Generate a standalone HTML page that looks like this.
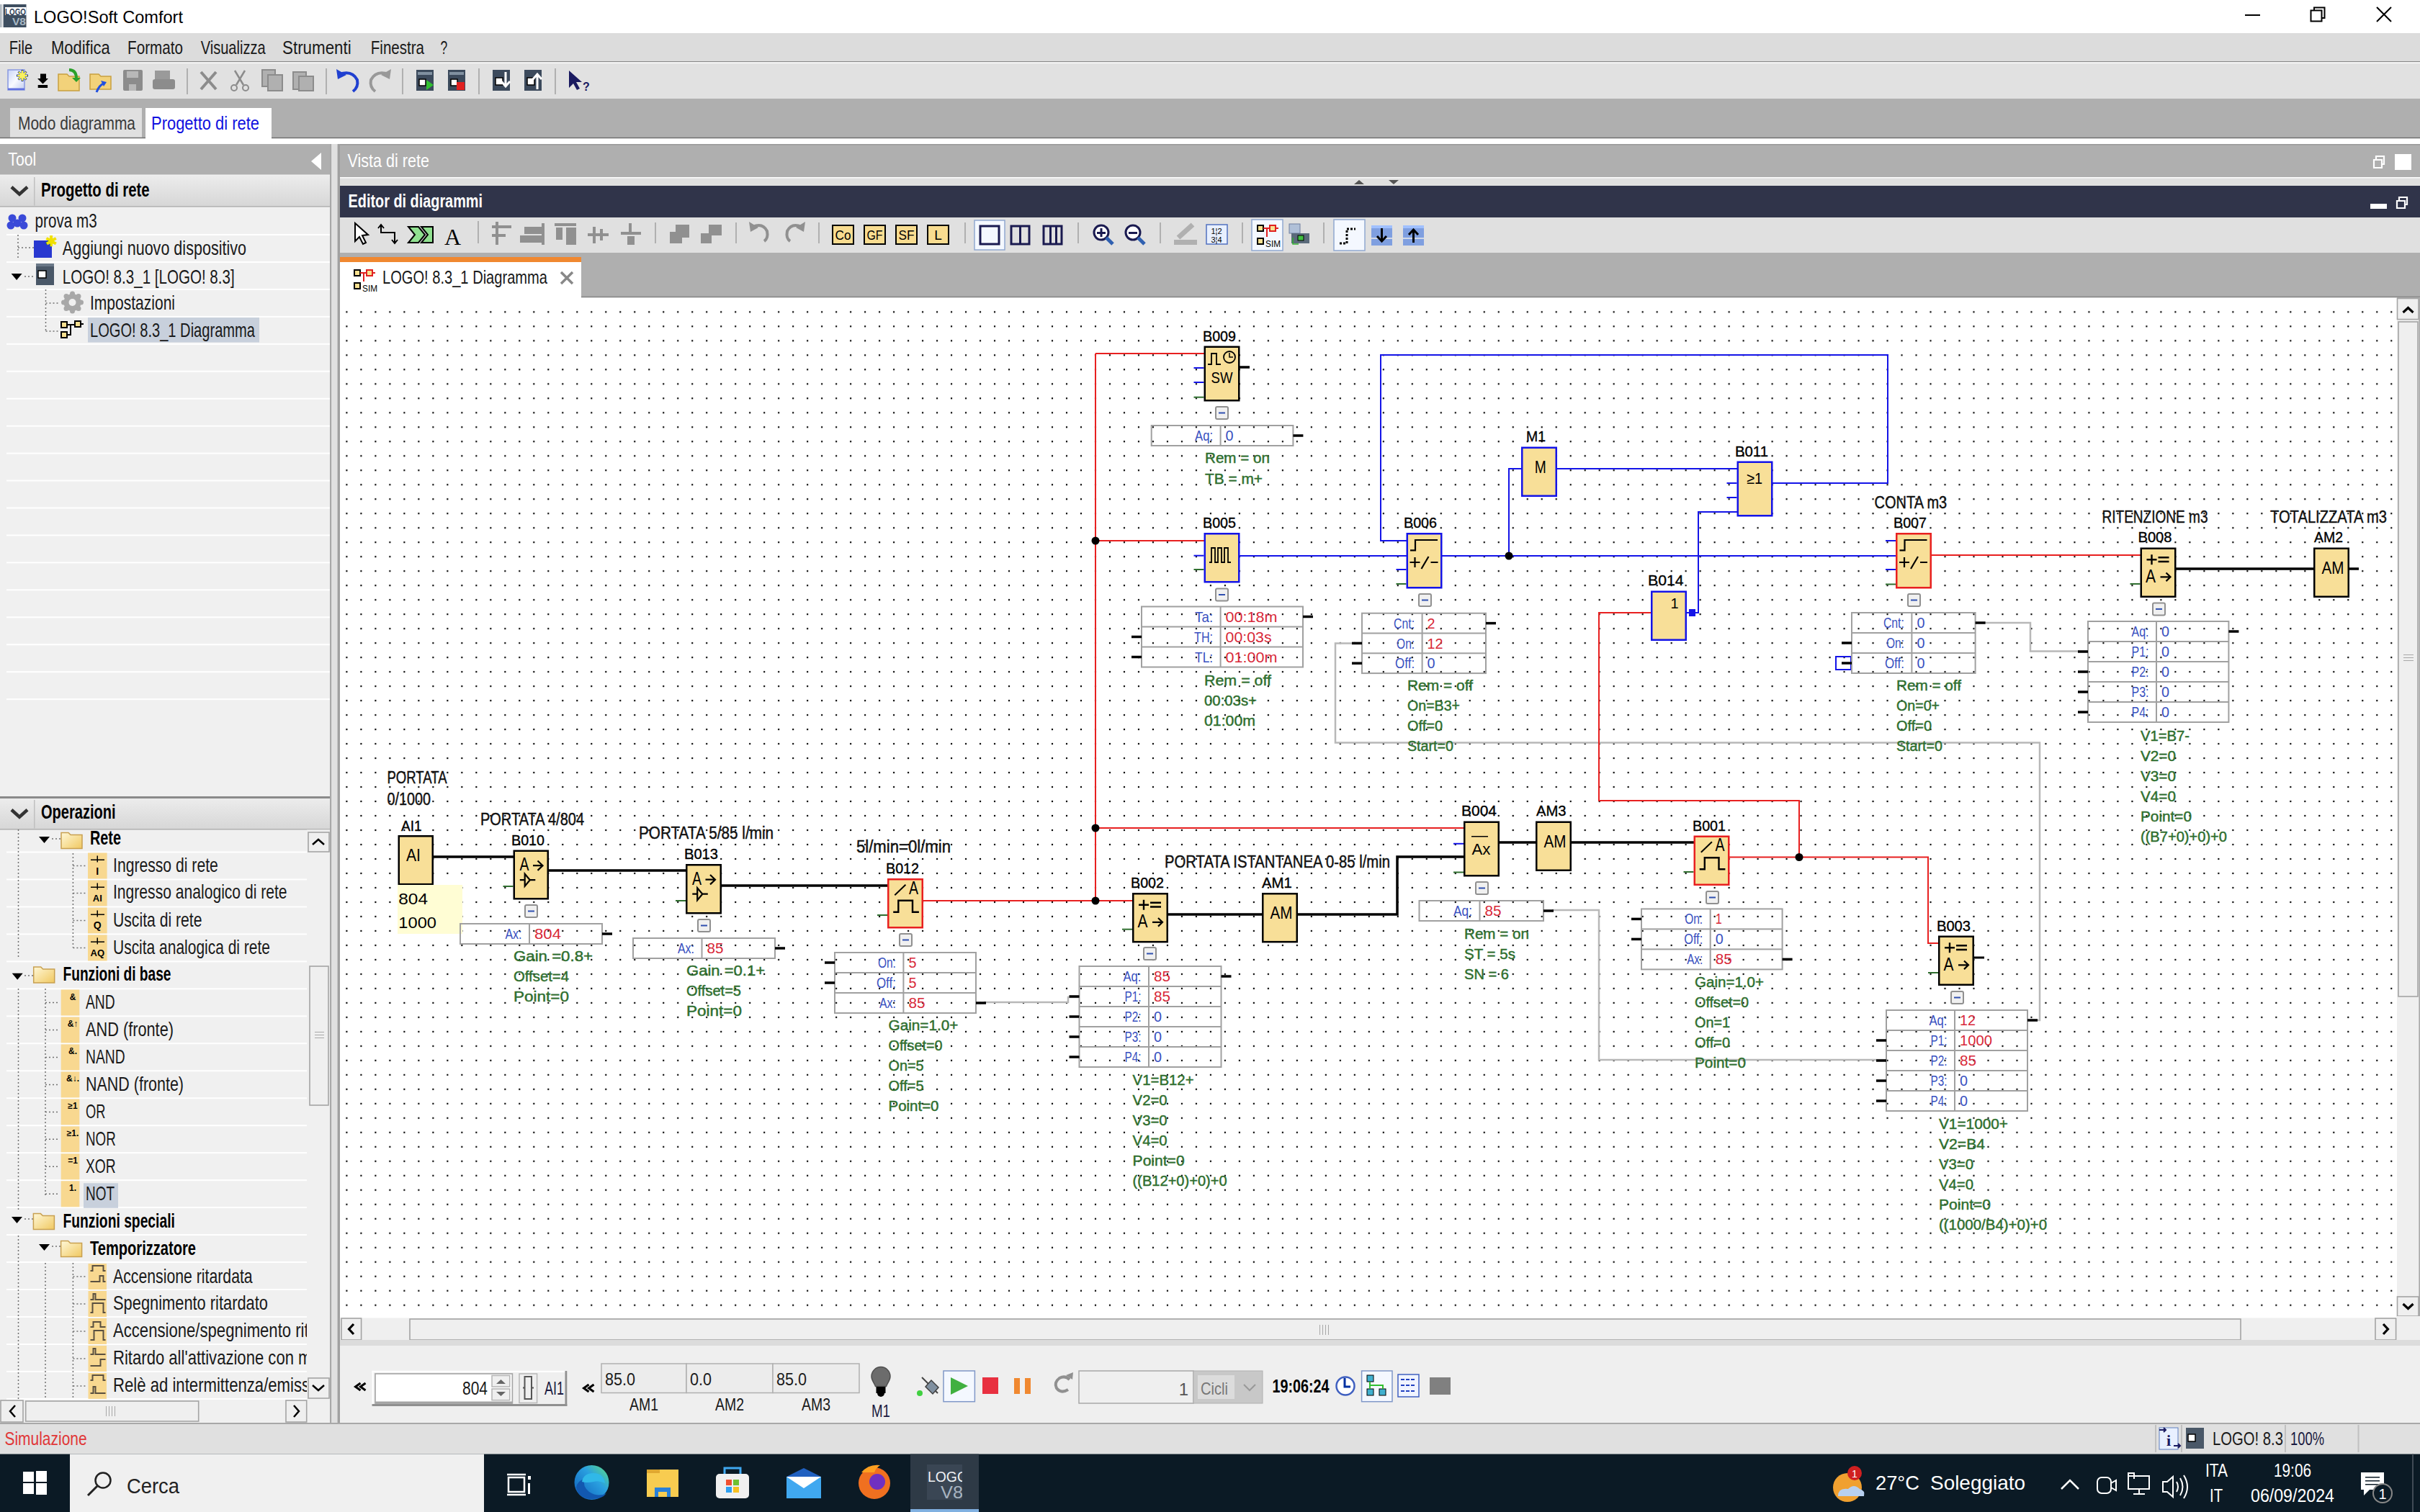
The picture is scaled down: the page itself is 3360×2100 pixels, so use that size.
<!DOCTYPE html>
<html><head><meta charset="utf-8"><title>LOGO!Soft Comfort</title>
<style>html,body{margin:0;padding:0;background:#fff;overflow:hidden;width:3360px;height:2100px}svg{display:block}</style>
</head><body>
<svg width="3360" height="2100" viewBox="0 0 3360 2100" font-family='"Liberation Sans", sans-serif'>
<defs><pattern id="dots" patternUnits="userSpaceOnUse" x="471.4" y="423.3" width="19.992" height="19.992"><circle cx="10" cy="10" r="1.2" fill="#000"/></pattern><linearGradient id="edgeg" x1="0" y1="1" x2="1" y2="0"><stop offset="0" stop-color="#0c5ab8"/><stop offset="0.6" stop-color="#2aa0e0"/><stop offset="1" stop-color="#60e080"/></linearGradient><linearGradient id="docg" x1="0" y1="0" x2="1" y2="1"><stop offset="0" stop-color="#c8d4f8"/><stop offset="0.5" stop-color="#f8faff"/><stop offset="1" stop-color="#c0ccf0"/></linearGradient><linearGradient id="hdrg" x1="0" y1="0" x2="0" y2="1"><stop offset="0" stop-color="#ececec"/><stop offset="1" stop-color="#d6d6d6"/></linearGradient><linearGradient id="foldg" x1="0" y1="0" x2="1" y2="1"><stop offset="0" stop-color="#fff8d8"/><stop offset="1" stop-color="#f0c860"/></linearGradient></defs>
<rect x="0" y="0" width="3360" height="46" fill="#ffffff" />
<rect x="0" y="6" width="1" height="32" fill="#8a96a2" />
<rect x="2" y="6" width="1" height="32" fill="#8a96a2" />
<rect x="4.6" y="6" width="31.9" height="32" fill="#3e4e60" />
<rect x="7" y="10" width="29.5" height="11" fill="#ffffff" />
<text x="7" y="20.5" font-size="13" fill="#33435a" font-family='"Liberation Sans", sans-serif' font-weight="bold" textLength="29" lengthAdjust="spacingAndGlyphs" >LOGO</text>
<text x="17" y="35" font-size="15" fill="#a8b8c4" font-family='"Liberation Sans", sans-serif' font-weight="bold" textLength="19" lengthAdjust="spacingAndGlyphs" >V8</text>
<text x="47" y="32" font-size="24" fill="#000" font-family='"Liberation Sans", sans-serif' textLength="207" lengthAdjust="spacingAndGlyphs" >LOGO!Soft Comfort</text>
<rect x="3117" y="20" width="21" height="2" fill="#000" />
<path d="M3208.5,14.5 h15 v15 h-15 z" fill="none" stroke="#000" stroke-width="2" />
<path d="M3213,14.5 v-4 h14.5 v14.5 h-4" fill="none" stroke="#000" stroke-width="2" />
<path d="M3300,10 L3320,30 M3320,10 L3300,30" fill="none" stroke="#000" stroke-width="2" />
<rect x="0" y="46" width="3360" height="39" fill="#dcdcdc" />
<rect x="0" y="85" width="3360" height="1.5" fill="#8a8a8a" />
<rect x="0" y="86.5" width="3360" height="1.5" fill="#ffffff" />
<text x="12.8" y="74.5" font-size="26" fill="#1a1a1a" font-family='"Liberation Sans", sans-serif' textLength="32.2" lengthAdjust="spacingAndGlyphs" >File</text>
<text x="71" y="74.5" font-size="26" fill="#1a1a1a" font-family='"Liberation Sans", sans-serif' textLength="81.7" lengthAdjust="spacingAndGlyphs" >Modifica</text>
<text x="177" y="74.5" font-size="26" fill="#1a1a1a" font-family='"Liberation Sans", sans-serif' textLength="77" lengthAdjust="spacingAndGlyphs" >Formato</text>
<text x="278.7" y="74.5" font-size="26" fill="#1a1a1a" font-family='"Liberation Sans", sans-serif' textLength="89.9" lengthAdjust="spacingAndGlyphs" >Visualizza</text>
<text x="392" y="74.5" font-size="26" fill="#1a1a1a" font-family='"Liberation Sans", sans-serif' textLength="95.7" lengthAdjust="spacingAndGlyphs" >Strumenti</text>
<text x="514.8" y="74.5" font-size="26" fill="#1a1a1a" font-family='"Liberation Sans", sans-serif' textLength="74.2" lengthAdjust="spacingAndGlyphs" >Finestra</text>
<text x="611.6" y="74.5" font-size="26" fill="#1a1a1a" font-family='"Liberation Sans", sans-serif' textLength="9.7" lengthAdjust="spacingAndGlyphs" >?</text>
<rect x="0" y="88" width="3360" height="49" fill="#e1e1e1" />
<rect x="259" y="95" width="2" height="36" fill="#b0b0b0" />
<rect x="452" y="95" width="2" height="36" fill="#b0b0b0" />
<rect x="558" y="95" width="2" height="36" fill="#b0b0b0" />
<rect x="664" y="95" width="2" height="36" fill="#b0b0b0" />
<rect x="770" y="95" width="2" height="36" fill="#b0b0b0" />
<rect x="11" y="97" width="23" height="28" fill="url(#docg)" stroke="#8898e0" stroke-width="1.5" />
<rect x="11" y="122.5" width="23" height="2.5" fill="#6070e0" />
<path d="M31,97 v16 M23,105 h16 M25.5,99.5 l11,11 M36.5,99.5 l-11,11" fill="none" stroke="#1a3080" stroke-width="3" />
<path d="M31,98 v14 M24,105 h14 M26,100 l10,10 M36,100 l-10,10" fill="none" stroke="#f8f040" stroke-width="2" />
<circle cx="31" cy="105" r="4" fill="#f8f060"/>
<path d="M56,102.5 h8 v6.5 h3 l-7.5,7.5 l-7.5,-7.5 h4 z" fill="#000" />
<rect x="52.7" y="118" width="13.399999999999991" height="4" fill="#000" />
<path d="M81,103 h12 l3,3 h14 v20 h-29 z" fill="#f2d27a" stroke="#c8a040" stroke-width="1.5" />
<path d="M96,97 q10,0 10,12" fill="none" stroke="#2aa02a" stroke-width="4" />
<path d="M100,108 l6,6 l6,-6 z" fill="#2aa02a" />
<path d="M125,103 h12 l3,3 h14 v18 h-29 z" fill="#f2d27a" stroke="#c8a040" stroke-width="1.5" />
<path d="M134,128 q4,-10 10,-12" fill="none" stroke="#2050e0" stroke-width="3" />
<path d="M140,112 l8,2 l-4,6 z" fill="#2050e0" />
<rect x="171" y="97" width="27" height="29" fill="#8c8c8c" rx="2" />
<rect x="176" y="99" width="16" height="9" fill="#b8b8b8" />
<rect x="179" y="117" width="10" height="9" fill="#b8b8b8" />
<rect x="215" y="98" width="21" height="12" fill="#9a9a9a" />
<rect x="212" y="110" width="31" height="14" fill="#8c8c8c" rx="3" />
<path d="M279,100 L300,124 M300,100 L279,124" fill="none" stroke="#8c8c8c" stroke-width="4" />
<path d="M326,98 L338,118 M340,98 L328,118" fill="none" stroke="#8c8c8c" stroke-width="2.5" />
<circle cx="325" cy="122" r="4" fill="none" stroke="#8c8c8c" stroke-width="2"/>
<circle cx="341" cy="122" r="4" fill="none" stroke="#8c8c8c" stroke-width="2"/>
<rect x="364" y="97" width="18" height="23" fill="#b0b0b0" stroke="#8c8c8c" stroke-width="2" />
<rect x="372" y="104" width="20" height="22" fill="#b0b0b0" stroke="#8c8c8c" stroke-width="2" />
<rect x="407" y="100" width="18" height="24" fill="#b0b0b0" stroke="#8c8c8c" stroke-width="2" />
<rect x="415" y="106" width="20" height="20" fill="#b0b0b0" stroke="#8c8c8c" stroke-width="2" />
<path d="M471,103 q18,-6 25,8 q2,10 -6,16" fill="none" stroke="#2040d0" stroke-width="4" />
<path d="M467,96 l2,14 l12,-6 z" fill="#2040d0" />
<path d="M540,103 q-18,-6 -25,8 q-2,10 6,16" fill="none" stroke="#999" stroke-width="4" />
<path d="M543,96 l-2,14 l-12,-6 z" fill="#999" />
<rect x="578" y="97" width="24" height="29" fill="#3c4a5c" />
<rect x="580" y="100" width="20" height="4" fill="#8090a0" />
<rect x="582" y="110" width="9" height="9" fill="#fff" stroke="#000" stroke-width="1.5" />
<rect x="622" y="97" width="24" height="29" fill="#3c4a5c" />
<rect x="624" y="100" width="20" height="4" fill="#8090a0" />
<rect x="626" y="110" width="9" height="9" fill="#fff" stroke="#000" stroke-width="1.5" />
<path d="M592,111 l10,7 l-10,7 z" fill="#30c030" />
<rect x="634" y="114" width="11" height="11" fill="#e02020" />
<rect x="684" y="97" width="24" height="29" fill="#3c4a5c" />
<rect x="688" y="108" width="10" height="10" fill="#fff" stroke="#000" stroke-width="1.5" />
<path d="M702,100 v20 M696,113 l6,7 l6,-7" fill="none" stroke="#fff" stroke-width="3" />
<rect x="728" y="97" width="24" height="29" fill="#3c4a5c" />
<rect x="732" y="108" width="10" height="10" fill="#fff" stroke="#000" stroke-width="1.5" />
<path d="M746,124 v-20 M740,110 l6,-7 l6,7" fill="none" stroke="#fff" stroke-width="3" />
<path d="M790,98 l0,24 l6,-6 l5,9 l4,-2 l-5,-9 l8,0 z" fill="#1a1a60" />
<text x="809" y="126" font-size="16" fill="#1a1a60" font-family='"Liberation Sans", sans-serif' font-weight="bold" >?</text>
<rect x="0" y="137" width="3360" height="53.5" fill="#afafaf" />
<rect x="0" y="190.5" width="3360" height="2.0" fill="#6e6e6e" />
<rect x="14" y="150" width="183" height="40.5" fill="#e0e0e0" />
<rect x="202" y="150" width="175" height="43" fill="#ffffff" />
<text x="25" y="179.5" font-size="26" fill="#3a3a3a" font-family='"Liberation Sans", sans-serif' textLength="163" lengthAdjust="spacingAndGlyphs" >Modo diagramma</text>
<text x="210" y="179.5" font-size="26" fill="#1010e0" font-family='"Liberation Sans", sans-serif' textLength="150" lengthAdjust="spacingAndGlyphs" >Progetto di rete</text>
<rect x="0" y="192.5" width="3360" height="7.5" fill="#ffffff" />
<rect x="0" y="200" width="458" height="1776" fill="#f0f0f0" />
<rect x="458" y="200" width="2.5" height="1776" fill="#a8a8a8" />
<rect x="460.5" y="200" width="8.0" height="1776" fill="#e0e0e0" />
<rect x="468.5" y="200" width="3.5" height="1776" fill="#a0a0a0" />
<rect x="0" y="200" width="458" height="42.5" fill="#afafaf" />
<text x="11.3" y="230" font-size="26" fill="#ffffff" font-family='"Liberation Sans", sans-serif' textLength="39.0" lengthAdjust="spacingAndGlyphs" >Tool</text>
<path d="M446,212 L432,224 L446,236 z" fill="#ffffff" />
<rect x="0" y="244" width="458" height="43.5" fill="url(#hdrg)"/>
<rect x="0" y="286.0" width="458" height="1.5" fill="#b4b4b4" />
<rect x="47" y="246" width="1.5" height="39.5" fill="#c0c0c0" />
<path d="M16,259.75 l11,10 l11,-10" fill="none" stroke="#333" stroke-width="4.5" />
<text x="57" y="272.5" font-size="28" fill="#000" font-family='"Liberation Sans", sans-serif' font-weight="bold" textLength="150.6" lengthAdjust="spacingAndGlyphs" >Progetto di rete</text>
<rect x="9" y="325.0" width="449" height="2.0" fill="#ffffff" />
<rect x="9" y="362.95" width="449" height="2.0" fill="#ffffff" />
<rect x="9" y="400.9" width="449" height="2.0" fill="#ffffff" />
<rect x="9" y="438.85" width="449" height="2.0" fill="#ffffff" />
<rect x="9" y="476.8" width="449" height="2.0" fill="#ffffff" />
<rect x="9" y="514.75" width="449" height="2.0" fill="#ffffff" />
<rect x="9" y="552.7" width="449" height="2.0" fill="#ffffff" />
<rect x="9" y="590.6500000000001" width="449" height="2.0" fill="#ffffff" />
<rect x="9" y="628.6" width="449" height="2.0" fill="#ffffff" />
<rect x="9" y="666.55" width="449" height="2.0" fill="#ffffff" />
<rect x="9" y="704.5" width="449" height="2.0" fill="#ffffff" />
<rect x="9" y="742.45" width="449" height="2.0" fill="#ffffff" />
<rect x="9" y="780.4000000000001" width="449" height="2.0" fill="#ffffff" />
<rect x="9" y="818.35" width="449" height="2.0" fill="#ffffff" />
<rect x="9" y="856.3000000000001" width="449" height="2.0" fill="#ffffff" />
<rect x="9" y="894.25" width="449" height="2.0" fill="#ffffff" />
<rect x="9" y="932.2" width="449" height="2.0" fill="#ffffff" />
<rect x="9" y="970.1500000000001" width="449" height="2.0" fill="#ffffff" />
<circle cx="17" cy="303" r="5.5" fill="#3a4ad8"/>
<circle cx="31" cy="303" r="5.5" fill="#3a4ad8"/>
<circle cx="24" cy="310" r="5.5" fill="#3a4ad8"/>
<circle cx="15" cy="313" r="5.5" fill="#3a4ad8"/>
<circle cx="33" cy="313" r="5.5" fill="#3a4ad8"/>
<text x="48.6" y="316" font-size="28" fill="#1a1a1a" font-family='"Liberation Sans", sans-serif' textLength="86.1" lengthAdjust="spacingAndGlyphs" >prova m3</text>
<line x1="25" y1="326" x2="25" y2="361" stroke="#707070" stroke-width="1.5" stroke-dasharray="2,3"/>
<line x1="25" y1="344" x2="47" y2="344" stroke="#707070" stroke-width="1.5" stroke-dasharray="2,3"/>
<rect x="47" y="334" width="25" height="24" fill="#2838d0" />
<text x="71" y="342" font-size="20" fill="#f0e000" font-family='"Liberation Sans", sans-serif' font-weight="bold" text-anchor="middle" >✱</text>
<text x="86.8" y="354" font-size="28" fill="#1a1a1a" font-family='"Liberation Sans", sans-serif' textLength="255.2" lengthAdjust="spacingAndGlyphs" >Aggiungi nuovo dispositivo</text>
<path d="M15.6,380 h15 l-7.5,9 z" fill="#000" />
<line x1="34" y1="384" x2="48" y2="384" stroke="#707070" stroke-width="1.5" stroke-dasharray="2,3"/>
<rect x="50" y="366" width="25" height="30" fill="#4a5868" />
<rect x="50" y="366" width="25" height="4" fill="#6a7888" />
<rect x="53" y="376" width="11" height="10" fill="#ffffff" stroke="#000" stroke-width="1.5" />
<text x="86.8" y="394" font-size="28" fill="#1a1a1a" font-family='"Liberation Sans", sans-serif' textLength="238.8" lengthAdjust="spacingAndGlyphs" >LOGO! 8.3_1 [LOGO! 8.3]</text>
<line x1="63.5" y1="402" x2="63.5" y2="460" stroke="#707070" stroke-width="1.5" stroke-dasharray="2,3"/>
<line x1="63.5" y1="421" x2="83" y2="421" stroke="#707070" stroke-width="1.5" stroke-dasharray="2,3"/>
<line x1="63.5" y1="460" x2="83" y2="460" stroke="#707070" stroke-width="1.5" stroke-dasharray="2,3"/>
<circle cx="100.5" cy="420" r="12" fill="#a8a8a8"/>
<circle cx="112.5" cy="420.0" r="3.5" fill="#a8a8a8"/>
<circle cx="108.98528137423857" cy="428.4852813742386" r="3.5" fill="#a8a8a8"/>
<circle cx="100.5" cy="432.0" r="3.5" fill="#a8a8a8"/>
<circle cx="92.01471862576143" cy="428.4852813742386" r="3.5" fill="#a8a8a8"/>
<circle cx="88.5" cy="420.0" r="3.5" fill="#a8a8a8"/>
<circle cx="92.01471862576143" cy="411.5147186257614" r="3.5" fill="#a8a8a8"/>
<circle cx="100.5" cy="408.0" r="3.5" fill="#a8a8a8"/>
<circle cx="108.98528137423857" cy="411.5147186257614" r="3.5" fill="#a8a8a8"/>
<circle cx="100.5" cy="420" r="5" fill="#f0f0f0"/>
<text x="125" y="429.7" font-size="28" fill="#1a1a1a" font-family='"Liberation Sans", sans-serif' textLength="118" lengthAdjust="spacingAndGlyphs" >Impostazioni</text>
<rect x="122" y="441" width="238" height="34.5" fill="#c8d0dc" />
<rect x="85" y="447" width="8" height="8" fill="#f8e090" stroke="#000" stroke-width="2" />
<rect x="85" y="461" width="8" height="8" fill="#f8e090" stroke="#000" stroke-width="2" />
<rect x="104" y="446" width="8" height="8" fill="#f8e090" stroke="#000" stroke-width="2" />
<path d="M93,451 h11 M98,451 v14 h-5 M112,450 h4" fill="none" stroke="#000" stroke-width="2" />
<text x="125" y="468" font-size="28" fill="#1a1a1a" font-family='"Liberation Sans", sans-serif' textLength="229" lengthAdjust="spacingAndGlyphs" >LOGO! 8.3_1 Diagramma</text>
<rect x="0" y="1106" width="458" height="3" fill="#8a8a8a" />
<rect x="0" y="1109" width="458" height="43.5" fill="url(#hdrg)"/>
<rect x="0" y="1151.0" width="458" height="1.5" fill="#b4b4b4" />
<rect x="47" y="1111" width="1.5" height="39.5" fill="#c0c0c0" />
<path d="M16,1124.75 l11,10 l11,-10" fill="none" stroke="#333" stroke-width="4.5" />
<text x="57" y="1137" font-size="28" fill="#000" font-family='"Liberation Sans", sans-serif' font-weight="bold" textLength="103.6" lengthAdjust="spacingAndGlyphs" >Operazioni</text>
<rect x="9" y="1182.5" width="417" height="2.0" fill="#ffffff" />
<rect x="9" y="1220.47" width="417" height="2.0" fill="#ffffff" />
<rect x="9" y="1258.44" width="417" height="2.0" fill="#ffffff" />
<rect x="9" y="1296.41" width="417" height="2.0" fill="#ffffff" />
<rect x="9" y="1334.38" width="417" height="2.0" fill="#ffffff" />
<rect x="9" y="1372.3500000000001" width="417" height="2.0" fill="#ffffff" />
<rect x="9" y="1410.3200000000002" width="417" height="2.0" fill="#ffffff" />
<rect x="9" y="1448.2900000000002" width="417" height="2.0" fill="#ffffff" />
<rect x="9" y="1486.2600000000002" width="417" height="2.0" fill="#ffffff" />
<rect x="9" y="1524.2300000000002" width="417" height="2.0" fill="#ffffff" />
<rect x="9" y="1562.2000000000003" width="417" height="2.0" fill="#ffffff" />
<rect x="9" y="1600.1700000000003" width="417" height="2.0" fill="#ffffff" />
<rect x="9" y="1638.1400000000003" width="417" height="2.0" fill="#ffffff" />
<rect x="9" y="1676.1100000000004" width="417" height="2.0" fill="#ffffff" />
<rect x="9" y="1714.0800000000004" width="417" height="2.0" fill="#ffffff" />
<rect x="9" y="1752.0500000000004" width="417" height="2.0" fill="#ffffff" />
<rect x="9" y="1790.0200000000004" width="417" height="2.0" fill="#ffffff" />
<rect x="9" y="1827.9900000000005" width="417" height="2.0" fill="#ffffff" />
<rect x="9" y="1865.9600000000005" width="417" height="2.0" fill="#ffffff" />
<rect x="9" y="1903.9300000000005" width="417" height="2.0" fill="#ffffff" />
<rect x="9" y="1941.9000000000005" width="417" height="2.0" fill="#ffffff" />
<rect x="426" y="1152.5" width="32" height="791.5" fill="#f0f0f0" />
<rect x="428" y="1156" width="29" height="27" fill="#efefef" stroke="#a4a4a4" stroke-width="1.6" />
<path d="M434,1173 l8,-7 l8,7" fill="none" stroke="#000" stroke-width="2.5" />
<rect x="430" y="1342" width="26" height="193" fill="#efefef" stroke="#a4a4a4" stroke-width="1.6" />
<rect x="437" y="1433" width="13" height="1" fill="#a8a8a8" />
<rect x="437" y="1437" width="13" height="1" fill="#a8a8a8" />
<rect x="437" y="1441" width="13" height="1" fill="#a8a8a8" />
<rect x="428" y="1914" width="29" height="28" fill="#efefef" stroke="#a4a4a4" stroke-width="1.6" />
<path d="M434,1924 l8,7 l8,-7" fill="none" stroke="#000" stroke-width="2.5" />
<rect x="0" y="1944" width="458" height="32" fill="#f0f0f0" />
<rect x="1" y="1945" width="31" height="30" fill="#efefef" stroke="#a4a4a4" stroke-width="1.6" />
<path d="M21,1952 l-7,8 l7,8" fill="none" stroke="#000" stroke-width="2.5" />
<rect x="35.7" y="1946" width="240.0" height="28" fill="#efefef" stroke="#a4a4a4" stroke-width="1.6" />
<rect x="147" y="1953" width="1" height="14" fill="#a8a8a8" />
<rect x="151" y="1953" width="1" height="14" fill="#a8a8a8" />
<rect x="155" y="1953" width="1" height="14" fill="#a8a8a8" />
<rect x="159" y="1953" width="1" height="14" fill="#a8a8a8" />
<rect x="397" y="1945" width="28.69999999999999" height="30" fill="#efefef" stroke="#a4a4a4" stroke-width="1.6" />
<path d="M408,1952 l7,8 l-7,8" fill="none" stroke="#000" stroke-width="2.5" />
<line x1="25.5" y1="1152" x2="25.5" y2="1331" stroke="#707070" stroke-width="1.5" stroke-dasharray="2,3"/>
<path d="M54,1162 h15 l-7.5,9 z" fill="#000" />
<line x1="72" y1="1165" x2="84" y2="1165" stroke="#707070" stroke-width="1.5" stroke-dasharray="2,3"/>
<path d="M85,1156.5 h10 l3,3 h16 v19 h-29 z" fill="url(#foldg)" stroke="#c8a050" stroke-width="1.5" />
<text x="125" y="1173" font-size="28" fill="#000" font-family='"Liberation Sans", sans-serif' font-weight="bold" textLength="43" lengthAdjust="spacingAndGlyphs" >Rete</text>
<line x1="101.4" y1="1185" x2="101.4" y2="1316" stroke="#707070" stroke-width="1.5" stroke-dasharray="2,3"/>
<line x1="101.4" y1="1202.5" x2="120" y2="1202.5" stroke="#707070" stroke-width="1.5" stroke-dasharray="2,3"/>
<rect x="122" y="1184.5" width="26.599999999999994" height="36.0" fill="#f8d890" />
<rect x="126" y="1193.5" width="19" height="1.5" fill="#000" />
<rect x="134.5" y="1188.5" width="1.5" height="9.0" fill="#000" />
<text x="135.3" y="1214.5" font-size="14" fill="#000" font-family='"Liberation Sans", sans-serif' font-weight="bold" text-anchor="middle" >I</text>
<text x="157" y="1210.5" font-size="28" fill="#1a1a1a" font-family='"Liberation Sans", sans-serif' textLength="145.8" lengthAdjust="spacingAndGlyphs" >Ingresso di rete</text>
<line x1="101.4" y1="1240.47" x2="120" y2="1240.47" stroke="#707070" stroke-width="1.5" stroke-dasharray="2,3"/>
<rect x="122" y="1222.47" width="26.599999999999994" height="36.0" fill="#f8d890" />
<rect x="126" y="1231.47" width="19" height="1.5" fill="#000" />
<rect x="134.5" y="1226.47" width="1.5" height="9.0" fill="#000" />
<text x="135.3" y="1252.47" font-size="13" fill="#000" font-family='"Liberation Sans", sans-serif' font-weight="bold" text-anchor="middle" >AI</text>
<text x="157" y="1248" font-size="28" fill="#1a1a1a" font-family='"Liberation Sans", sans-serif' textLength="241.6" lengthAdjust="spacingAndGlyphs" >Ingresso analogico di rete</text>
<line x1="101.4" y1="1278.44" x2="120" y2="1278.44" stroke="#707070" stroke-width="1.5" stroke-dasharray="2,3"/>
<rect x="122" y="1260.44" width="26.599999999999994" height="36.0" fill="#f8d890" />
<rect x="126" y="1269.44" width="19" height="1.5" fill="#000" />
<rect x="134.5" y="1264.44" width="1.5" height="9.0" fill="#000" />
<text x="135.3" y="1290.44" font-size="14" fill="#000" font-family='"Liberation Sans", sans-serif' font-weight="bold" text-anchor="middle" >Q</text>
<text x="157" y="1287" font-size="28" fill="#1a1a1a" font-family='"Liberation Sans", sans-serif' textLength="123.5" lengthAdjust="spacingAndGlyphs" >Uscita di rete</text>
<line x1="101.4" y1="1316.41" x2="120" y2="1316.41" stroke="#707070" stroke-width="1.5" stroke-dasharray="2,3"/>
<rect x="122" y="1298.41" width="26.599999999999994" height="36.0" fill="#f8d890" />
<rect x="126" y="1307.41" width="19" height="1.5" fill="#000" />
<rect x="134.5" y="1302.41" width="1.5" height="9.0" fill="#000" />
<text x="135.3" y="1328.41" font-size="13" fill="#000" font-family='"Liberation Sans", sans-serif' font-weight="bold" text-anchor="middle" >AQ</text>
<text x="157" y="1325" font-size="28" fill="#1a1a1a" font-family='"Liberation Sans", sans-serif' textLength="218" lengthAdjust="spacingAndGlyphs" >Uscita analogica di rete</text>
<path d="M16.7,1351.7 h15 l-7.5,9 z" fill="#000" />
<line x1="34" y1="1355" x2="46" y2="1355" stroke="#707070" stroke-width="1.5" stroke-dasharray="2,3"/>
<path d="M46.7,1343 h10 l3,3 h16 v19 h-29 z" fill="url(#foldg)" stroke="#c8a050" stroke-width="1.5" />
<text x="87.5" y="1362" font-size="28" fill="#000" font-family='"Liberation Sans", sans-serif' font-weight="bold" textLength="150.0" lengthAdjust="spacingAndGlyphs" >Funzioni di base</text>
<line x1="25.5" y1="1373" x2="25.5" y2="1680" stroke="#707070" stroke-width="1.5" stroke-dasharray="2,3"/>
<line x1="63" y1="1373" x2="63" y2="1660" stroke="#707070" stroke-width="1.5" stroke-dasharray="2,3"/>
<line x1="63" y1="1392.5" x2="83" y2="1392.5" stroke="#707070" stroke-width="1.5" stroke-dasharray="2,3"/>
<rect x="84.7" y="1374.5" width="25.599999999999994" height="36.0" fill="#f8d890" />
<text x="101" y="1388.5" font-size="12" fill="#000" font-family='"Liberation Sans", sans-serif' font-weight="bold" text-anchor="middle" >&amp;</text>
<text x="119" y="1401.0" font-size="28" fill="#1a1a1a" font-family='"Liberation Sans", sans-serif' textLength="40.7" lengthAdjust="spacingAndGlyphs" >AND</text>
<line x1="63" y1="1430.47" x2="83" y2="1430.47" stroke="#707070" stroke-width="1.5" stroke-dasharray="2,3"/>
<rect x="84.7" y="1412.47" width="25.599999999999994" height="36.0" fill="#f8d890" />
<text x="101" y="1426.47" font-size="12" fill="#000" font-family='"Liberation Sans", sans-serif' font-weight="bold" text-anchor="middle" >&amp;↑</text>
<text x="119" y="1438.97" font-size="28" fill="#1a1a1a" font-family='"Liberation Sans", sans-serif' textLength="122" lengthAdjust="spacingAndGlyphs" >AND (fronte)</text>
<line x1="63" y1="1468.44" x2="83" y2="1468.44" stroke="#707070" stroke-width="1.5" stroke-dasharray="2,3"/>
<rect x="84.7" y="1450.44" width="25.599999999999994" height="36.0" fill="#f8d890" />
<text x="101" y="1464.44" font-size="12" fill="#000" font-family='"Liberation Sans", sans-serif' font-weight="bold" text-anchor="middle" >&amp;.</text>
<text x="119" y="1476.94" font-size="28" fill="#1a1a1a" font-family='"Liberation Sans", sans-serif' textLength="54.6" lengthAdjust="spacingAndGlyphs" >NAND</text>
<line x1="63" y1="1506.41" x2="83" y2="1506.41" stroke="#707070" stroke-width="1.5" stroke-dasharray="2,3"/>
<rect x="84.7" y="1488.41" width="25.599999999999994" height="36.0" fill="#f8d890" />
<text x="101" y="1502.41" font-size="12" fill="#000" font-family='"Liberation Sans", sans-serif' font-weight="bold" text-anchor="middle" >&amp;↓.</text>
<text x="119" y="1514.91" font-size="28" fill="#1a1a1a" font-family='"Liberation Sans", sans-serif' textLength="136" lengthAdjust="spacingAndGlyphs" >NAND (fronte)</text>
<line x1="63" y1="1544.38" x2="83" y2="1544.38" stroke="#707070" stroke-width="1.5" stroke-dasharray="2,3"/>
<rect x="84.7" y="1526.38" width="25.599999999999994" height="36.0" fill="#f8d890" />
<text x="101" y="1540.38" font-size="12" fill="#000" font-family='"Liberation Sans", sans-serif' font-weight="bold" text-anchor="middle" >≥1</text>
<text x="119" y="1552.88" font-size="28" fill="#1a1a1a" font-family='"Liberation Sans", sans-serif' textLength="27.4" lengthAdjust="spacingAndGlyphs" >OR</text>
<line x1="63" y1="1582.35" x2="83" y2="1582.35" stroke="#707070" stroke-width="1.5" stroke-dasharray="2,3"/>
<rect x="84.7" y="1564.35" width="25.599999999999994" height="36.0" fill="#f8d890" />
<text x="101" y="1578.35" font-size="12" fill="#000" font-family='"Liberation Sans", sans-serif' font-weight="bold" text-anchor="middle" >≥1.</text>
<text x="119" y="1590.85" font-size="28" fill="#1a1a1a" font-family='"Liberation Sans", sans-serif' textLength="41.7" lengthAdjust="spacingAndGlyphs" >NOR</text>
<line x1="63" y1="1620.32" x2="83" y2="1620.32" stroke="#707070" stroke-width="1.5" stroke-dasharray="2,3"/>
<rect x="84.7" y="1602.32" width="25.599999999999994" height="36.0" fill="#f8d890" />
<text x="101" y="1616.32" font-size="12" fill="#000" font-family='"Liberation Sans", sans-serif' font-weight="bold" text-anchor="middle" >=1</text>
<text x="119" y="1628.82" font-size="28" fill="#1a1a1a" font-family='"Liberation Sans", sans-serif' textLength="41.7" lengthAdjust="spacingAndGlyphs" >XOR</text>
<line x1="63" y1="1658.29" x2="83" y2="1658.29" stroke="#707070" stroke-width="1.5" stroke-dasharray="2,3"/>
<rect x="84.7" y="1640.29" width="25.599999999999994" height="36.0" fill="#f8d890" />
<text x="101" y="1654.29" font-size="12" fill="#000" font-family='"Liberation Sans", sans-serif' font-weight="bold" text-anchor="middle" >1.</text>
<rect x="116" y="1643.29" width="48" height="34.5" fill="#c8d0dc" />
<text x="119" y="1666.79" font-size="28" fill="#1a1a1a" font-family='"Liberation Sans", sans-serif' textLength="40" lengthAdjust="spacingAndGlyphs" >NOT</text>
<path d="M16,1690 h15 l-7.5,9 z" fill="#000" />
<line x1="34" y1="1693" x2="46" y2="1693" stroke="#707070" stroke-width="1.5" stroke-dasharray="2,3"/>
<path d="M46.4,1685.6 h10 l3,3 h16 v19 h-29 z" fill="url(#foldg)" stroke="#c8a050" stroke-width="1.5" />
<text x="87.5" y="1705" font-size="28" fill="#000" font-family='"Liberation Sans", sans-serif' font-weight="bold" textLength="155.4" lengthAdjust="spacingAndGlyphs" >Funzioni speciali</text>
<line x1="25.5" y1="1716" x2="25.5" y2="1944" stroke="#707070" stroke-width="1.5" stroke-dasharray="2,3"/>
<path d="M54,1728 h15 l-7.5,9 z" fill="#000" />
<line x1="72" y1="1731" x2="84" y2="1731" stroke="#707070" stroke-width="1.5" stroke-dasharray="2,3"/>
<path d="M84.6,1723.5 h10 l3,3 h16 v19 h-29 z" fill="url(#foldg)" stroke="#c8a050" stroke-width="1.5" />
<text x="125" y="1742.5" font-size="28" fill="#000" font-family='"Liberation Sans", sans-serif' font-weight="bold" textLength="147" lengthAdjust="spacingAndGlyphs" >Temporizzatore</text>
<line x1="63" y1="1754" x2="63" y2="1944" stroke="#707070" stroke-width="1.5" stroke-dasharray="2,3"/>
<line x1="101.4" y1="1754" x2="101.4" y2="1944" stroke="#707070" stroke-width="1.5" stroke-dasharray="2,3"/>
<clipPath id="treeclip"><rect x="0" y="1152" width="426" height="792"/></clipPath>
<g clip-path="url(#treeclip)">
<line x1="101.4" y1="1773.0" x2="120" y2="1773.0" stroke="#707070" stroke-width="1.5" stroke-dasharray="2,3"/>
<rect x="122.5" y="1755.0" width="25.5" height="36.0" fill="#f8d890" />
<path d="M125.5,1765.0 h3 v-7 h15 v7 h3 M125.5,1780.0 h13 v-8 h5 v8 h3" fill="none" stroke="#5a5040" stroke-width="2" />
<text x="157" y="1781.5" font-size="28" fill="#1a1a1a" font-family='"Liberation Sans", sans-serif' textLength="193.7" lengthAdjust="spacingAndGlyphs" >Accensione ritardata</text>
<line x1="101.4" y1="1810.97" x2="120" y2="1810.97" stroke="#707070" stroke-width="1.5" stroke-dasharray="2,3"/>
<rect x="122.5" y="1792.97" width="25.5" height="36.0" fill="#f8d890" />
<path d="M125.5,1804.97 h4 v-8 h3 v8 h14 M125.5,1822.97 h3 v-13 h15 v13 h3" fill="none" stroke="#5a5040" stroke-width="2" />
<text x="157" y="1819.47" font-size="28" fill="#1a1a1a" font-family='"Liberation Sans", sans-serif' textLength="215" lengthAdjust="spacingAndGlyphs" >Spegnimento ritardato</text>
<line x1="101.4" y1="1848.94" x2="120" y2="1848.94" stroke="#707070" stroke-width="1.5" stroke-dasharray="2,3"/>
<rect x="122.5" y="1830.94" width="25.5" height="36.0" fill="#f8d890" />
<path d="M125.5,1842.94 h4 v-7 h10 v7 h7 M125.5,1860.94 h5 v-13 h13 v13 h3" fill="none" stroke="#5a5040" stroke-width="2" />
<text x="157" y="1857.44" font-size="28" fill="#1a1a1a" font-family='"Liberation Sans", sans-serif' textLength="327" lengthAdjust="spacingAndGlyphs" >Accensione/spegnimento ritardati</text>
<line x1="101.4" y1="1886.91" x2="120" y2="1886.91" stroke="#707070" stroke-width="1.5" stroke-dasharray="2,3"/>
<rect x="122.5" y="1868.91" width="25.5" height="36.0" fill="#f8d890" />
<path d="M125.5,1880.91 h4 v-8 h3 v8 h14 M125.5,1896.91 h14 v-9 h7" fill="none" stroke="#5a5040" stroke-width="2" />
<text x="157" y="1895.41" font-size="28" fill="#1a1a1a" font-family='"Liberation Sans", sans-serif' textLength="343" lengthAdjust="spacingAndGlyphs" >Ritardo all&#x27;attivazione con memoria</text>
<line x1="101.4" y1="1924.88" x2="120" y2="1924.88" stroke="#707070" stroke-width="1.5" stroke-dasharray="2,3"/>
<rect x="122.5" y="1906.88" width="25.5" height="36.0" fill="#f8d890" />
<path d="M125.5,1916.88 h3 v-7 h15 v7 h3 M125.5,1934.88 h4 v-9 h3 v9 h14" fill="none" stroke="#5a5040" stroke-width="2" />
<text x="157" y="1933.38" font-size="28" fill="#1a1a1a" font-family='"Liberation Sans", sans-serif' textLength="390" lengthAdjust="spacingAndGlyphs" >Relè ad intermittenza/emissione impulsi</text>
</g>
<rect x="472" y="200" width="2888" height="46" fill="#afafaf" />
<rect x="472" y="200" width="2888" height="1.5" fill="#9a9a9a" />
<text x="482.5" y="232" font-size="26" fill="#ffffff" font-family='"Liberation Sans", sans-serif' textLength="113.5" lengthAdjust="spacingAndGlyphs" >Vista di rete</text>
<path d="M3296,222 v11 h11 v-11 z M3299,222 v-5 h11 v11 h-3" fill="none" stroke="#fff" stroke-width="2.2" />
<rect x="3325" y="214" width="23" height="22" fill="#ffffff" />
<rect x="472" y="246" width="2888" height="1.5" fill="#ffffff" />
<rect x="472" y="247.5" width="2888" height="10.5" fill="#e0e0e0" />
<path d="M1880,256 l7,-6 l7,6 z M1928,250 l7,6 l7,-6 z" fill="#555" />
<rect x="472" y="258" width="2888" height="44" fill="#30344a" />
<text x="483.5" y="288" font-size="26" fill="#ffffff" font-family='"Liberation Sans", sans-serif' font-weight="bold" textLength="186.5" lengthAdjust="spacingAndGlyphs" >Editor di diagrammi</text>
<rect x="3291" y="283" width="23" height="7" fill="#ffffff" />
<path d="M3328,279 v10 h11 v-10 z M3331,279 v-5 h11 v10 h-3" fill="none" stroke="#fff" stroke-width="2.2" />
<rect x="472" y="302" width="2888" height="49" fill="#e0e0e0" />
<path d="M493,310 v25 l6,-6 l5,10 l4,-2 l-5,-10 l8,-1 z" fill="#fff" stroke="#000" stroke-width="2" />
<path d="M529,313 v10 h19 v15 M525,317 l4,-5 l4,5 M544,333 l4,5 l4,-5" fill="none" stroke="#000" stroke-width="2" />
<path d="M567,315 h14 l9,11 l-9,11 h-14 l9,-11 z" fill="#90e090" stroke="#000" stroke-width="2" />
<path d="M585,315 h16 v22 h-16 l9,-11 z" fill="#90e090" stroke="#000" stroke-width="2" />
<text x="617" y="340" font-size="32" fill="#000" font-family='"Liberation Serif", serif' >A</text>
<rect x="663" y="307" width="2" height="31" fill="#b0b0b0" />
<rect x="688" y="308" width="4" height="32" fill="#909090" />
<rect x="683" y="313" width="27" height="4" fill="#909090" />
<rect x="683" y="325" width="19" height="4" fill="#909090" />
<rect x="728" y="315" width="25" height="10" fill="#909090" />
<rect x="722" y="327" width="31" height="10" fill="#909090" />
<rect x="752" y="310" width="4" height="30" fill="#909090" />
<rect x="770" y="310" width="30" height="4" fill="#909090" />
<rect x="772" y="316" width="9" height="17" fill="#909090" />
<rect x="786" y="316" width="14" height="24" fill="#909090" />
<rect x="816" y="324" width="29" height="4" fill="#909090" />
<rect x="823" y="315" width="4" height="23" fill="#909090" />
<rect x="833" y="318" width="4" height="16" fill="#909090" />
<rect x="862" y="322" width="28" height="4" fill="#909090" />
<rect x="873" y="310" width="4" height="12" fill="#909090" />
<rect x="871" y="328" width="10" height="12" fill="#909090" />
<rect x="909" y="309" width="2" height="29" fill="#b0b0b0" />
<rect x="930" y="322" width="17" height="16" fill="#909090" />
<rect x="938" y="312" width="19" height="18" fill="#909090" />
<rect x="973" y="324" width="15" height="14" fill="#909090" />
<rect x="984" y="312" width="18" height="15" fill="#909090" />
<rect x="1021" y="309" width="2" height="29" fill="#b0b0b0" />
<path d="M1045,315 q14,-6 20,6 q2,10 -4,14" fill="none" stroke="#909090" stroke-width="4" />
<path d="M1040,308 l2,14 l11,-6 z" fill="#909090" />
<path d="M1113,315 q-14,-6 -20,6 q-2,10 4,14" fill="none" stroke="#909090" stroke-width="4" />
<path d="M1118,308 l-2,14 l-11,-6 z" fill="#909090" />
<rect x="1136" y="309" width="2" height="29" fill="#b0b0b0" />
<rect x="1156" y="313" width="29" height="26" fill="#f8dc90" stroke="#000" stroke-width="2" />
<text x="1170.5" y="333" font-size="19" fill="#000" font-family='"Liberation Sans", sans-serif' text-anchor="middle" textLength="22" lengthAdjust="spacingAndGlyphs" >Co</text>
<rect x="1200" y="313" width="29" height="26" fill="#f8dc90" stroke="#000" stroke-width="2" />
<text x="1214.5" y="333" font-size="19" fill="#000" font-family='"Liberation Sans", sans-serif' text-anchor="middle" textLength="22" lengthAdjust="spacingAndGlyphs" >GF</text>
<rect x="1244" y="313" width="29" height="26" fill="#f8dc90" stroke="#000" stroke-width="2" />
<text x="1258.5" y="333" font-size="19" fill="#000" font-family='"Liberation Sans", sans-serif' text-anchor="middle" textLength="22" lengthAdjust="spacingAndGlyphs" >SF</text>
<rect x="1288" y="313" width="29" height="26" fill="#f8dc90" stroke="#000" stroke-width="2" />
<text x="1302.5" y="333" font-size="19" fill="#000" font-family='"Liberation Sans", sans-serif' text-anchor="middle" >L</text>
<rect x="1339" y="309" width="2" height="29" fill="#b0b0b0" />
<rect x="1353" y="306" width="42" height="41" fill="#f4f8ff" stroke="#90a8d0" stroke-width="1.5" />
<rect x="1361" y="314" width="26" height="25" fill="none" stroke="#1a1a50" stroke-width="3" />
<rect x="1404" y="314" width="25" height="25" fill="none" stroke="#1a1a50" stroke-width="3" />
<rect x="1415" y="314" width="3" height="25" fill="#1a1a50" />
<rect x="1449" y="314" width="25" height="25" fill="none" stroke="#1a1a50" stroke-width="3" />
<rect x="1457" y="314" width="3" height="25" fill="#1a1a50" />
<rect x="1465" y="314" width="3" height="25" fill="#1a1a50" />
<rect x="1496" y="309" width="2" height="29" fill="#b0b0b0" />
<circle cx="1529" cy="323" r="10" fill="#fff" stroke="#1a1a50" stroke-width="3"/>
<rect x="1523" y="322" width="12" height="3" fill="#1a1a50" />
<rect x="1527.5" y="317" width="3.0" height="12" fill="#1a1a50" />
<path d="M1536,330 l9,9" fill="none" stroke="#3060b0" stroke-width="5" />
<circle cx="1573" cy="323" r="10" fill="#fff" stroke="#1a1a50" stroke-width="3"/>
<rect x="1567" y="322" width="12" height="3" fill="#1a1a50" />
<path d="M1580,330 l9,9" fill="none" stroke="#3060b0" stroke-width="5" />
<rect x="1610" y="309" width="2" height="29" fill="#b0b0b0" />
<rect x="1630" y="333" width="32" height="7" fill="#b0b0b0" />
<path d="M1636,330 l20,-18" fill="none" stroke="#b0b0b0" stroke-width="7" />
<rect x="1675" y="312" width="29" height="27" fill="#e8f0ff" stroke="#5070c0" stroke-width="1.5" />
<text x="1689" y="325" font-size="11" fill="#000" font-family='"Liberation Sans", sans-serif' text-anchor="middle" >1¦2</text>
<text x="1689" y="337" font-size="11" fill="#000" font-family='"Liberation Sans", sans-serif' text-anchor="middle" >3¦4</text>
<rect x="1724" y="309" width="2" height="29" fill="#b0b0b0" />
<rect x="1738" y="305" width="43" height="43" fill="#f4f8ff" stroke="#90a8d0" stroke-width="1.5" />
<rect x="1746" y="313" width="8" height="8" fill="#f8e090" stroke="#000" stroke-width="2" />
<rect x="1746" y="331" width="8" height="8" fill="#f8e090" stroke="#000" stroke-width="2" />
<rect x="1763" y="313" width="8" height="8" fill="#f8e090" stroke="#e02020" stroke-width="2" />
<path d="M1754,317 h9 M1759,317 v12 M1771,317 h4" fill="none" stroke="#e02020" stroke-width="2" />
<text x="1757" y="343" font-size="12" fill="#000" font-family='"Liberation Sans", sans-serif' textLength="21" lengthAdjust="spacingAndGlyphs" >SIM</text>
<rect x="1790" y="311" width="15" height="13" fill="#b0c0d8" stroke="#7080a0" stroke-width="1" />
<rect x="1793" y="324" width="25" height="14" fill="#5a6a7a" />
<rect x="1802" y="327" width="8" height="7" fill="#40c040" stroke="#000" stroke-width="1" />
<path d="M1795,330 v9 h8" fill="none" stroke="#30b030" stroke-width="1.5" />
<rect x="1837" y="309" width="2" height="29" fill="#b0b0b0" />
<rect x="1852" y="305" width="43" height="43" fill="#f4f8ff" stroke="#90a8d0" stroke-width="1.5" />
<path d="M1860,338 h10 v-20 h12" fill="none" stroke="#000" stroke-width="3" stroke-dasharray="3,2"/>
<rect x="1904" y="313" width="29" height="28" fill="#7f9fe0" />
<rect x="1904" y="313" width="29" height="4" fill="#a0c0ff" />
<rect x="1904" y="330" width="29" height="2" fill="#d0d8e8" />
<path d="M1918.5,317 v17 M1912,328 l6.5,7 l6.5,-7" fill="none" stroke="#000" stroke-width="3" />
<rect x="1948" y="313" width="29" height="28" fill="#7f9fe0" />
<rect x="1948" y="313" width="29" height="4" fill="#a0c0ff" />
<rect x="1948" y="330" width="29" height="2" fill="#d0d8e8" />
<path d="M1962.5,337 v-17 M1956,326 l6.5,-7 l6.5,7" fill="none" stroke="#000" stroke-width="3" />
<rect x="472" y="351" width="2888" height="62.5" fill="#afafaf" />
<rect x="472" y="411.5" width="2888" height="2.0" fill="#8c8c8c" />
<rect x="472" y="357" width="335" height="7" fill="#f08830" />
<rect x="472" y="364" width="335" height="50" fill="#ffffff" />
<rect x="492" y="375" width="8" height="8" fill="#f8e090" stroke="#000" stroke-width="2" />
<rect x="492" y="393" width="8" height="8" fill="#f8e090" stroke="#000" stroke-width="2" />
<rect x="509" y="375" width="8" height="8" fill="#f8e090" stroke="#e02020" stroke-width="2" />
<path d="M500,379 h9 M505,379 v12 M517,379 h4" fill="none" stroke="#e02020" stroke-width="2" />
<text x="503" y="405" font-size="12" fill="#000" font-family='"Liberation Sans", sans-serif' textLength="21" lengthAdjust="spacingAndGlyphs" >SIM</text>
<text x="531" y="394" font-size="26" fill="#1a1a1a" font-family='"Liberation Sans", sans-serif' textLength="229" lengthAdjust="spacingAndGlyphs" >LOGO! 8.3_1 Diagramma</text>
<path d="M779,378 L795,394 M795,378 L779,394" fill="none" stroke="#888" stroke-width="3.5" />
<rect x="472" y="413.5" width="2856" height="1417.5" fill="#ffffff" />
<rect x="472" y="416" width="2856" height="1413" fill="url(#dots)"/>
<polyline points="601,1190 713,1190" fill="none" stroke="#000" stroke-width="3.5" />
<polyline points="761,1209 953,1209" fill="none" stroke="#000" stroke-width="3.5" />
<polyline points="1001,1230 1233,1230" fill="none" stroke="#000" stroke-width="3.5" />
<polyline points="1622,1270 1752,1270" fill="none" stroke="#000" stroke-width="3.5" />
<polyline points="1801,1270 1940,1270 1940,1190 2032,1190" fill="none" stroke="#000" stroke-width="3.5" />
<polyline points="2081,1170 2132,1170" fill="none" stroke="#000" stroke-width="3.5" />
<polyline points="2181,1170 2352,1170" fill="none" stroke="#000" stroke-width="3.5" />
<polyline points="3020,790 3212,790" fill="none" stroke="#000" stroke-width="3.5" />
<polyline points="3261,790 3275,790" fill="none" stroke="#000" stroke-width="3.5" />
<polyline points="1721,510 1735,510" fill="none" stroke="#000" stroke-width="3.5" />
<polyline points="1366,1392 1483,1392 1483,1385 1498,1385" fill="none" stroke="#b8b8b8" stroke-width="2.5" />
<polyline points="2155,1264 2220,1264 2220,1472 2619,1472" fill="none" stroke="#b8b8b8" stroke-width="2.5" />
<polyline points="1877,893.5 1854,893.5 1854,1031.5 2832,1031.5 2832,1417 2815,1417" fill="none" stroke="#b8b8b8" stroke-width="2.5" />
<polyline points="2755,865 2819,865 2819,904.5 2899,904.5" fill="none" stroke="#b8b8b8" stroke-width="2.5" />
<polyline points="1281,1251 1572,1251" fill="none" stroke="#e82020" stroke-width="2" />
<polyline points="1521,491 1521,1251" fill="none" stroke="#e82020" stroke-width="2" />
<polyline points="1521,491 1672,491" fill="none" stroke="#e82020" stroke-width="2" />
<polyline points="1521,751 1672,751" fill="none" stroke="#e82020" stroke-width="2" />
<polyline points="1521,1150 2032,1150" fill="none" stroke="#e82020" stroke-width="2" />
<polyline points="2401,1190.5 2498,1190.5" fill="none" stroke="#e82020" stroke-width="2" />
<polyline points="2498,1190.5 2498,1112 2220,1112 2220,851 2292,851" fill="none" stroke="#e82020" stroke-width="2" />
<polyline points="2498,1190.5 2677,1190.5 2677,1310 2692,1310" fill="none" stroke="#e82020" stroke-width="2" />
<polyline points="2681,771 2972,771" fill="none" stroke="#e82020" stroke-width="2" />
<polyline points="1721,772 1953,772" fill="none" stroke="#1414e8" stroke-width="2" />
<polyline points="1953,751 1917,751 1917,493 2621,493 2621,671 2460,671" fill="none" stroke="#1414e8" stroke-width="2" />
<polyline points="2001,772 2632,772" fill="none" stroke="#1414e8" stroke-width="2" />
<polyline points="2095,772 2095,651 2112,651" fill="none" stroke="#1414e8" stroke-width="2" />
<polyline points="2161,651 2412,651" fill="none" stroke="#1414e8" stroke-width="2" />
<polyline points="2412,711 2358,711 2358,851 2342,851" fill="none" stroke="#1414e8" stroke-width="2" />
<rect x="2345" y="846" width="9" height="10" fill="#1414e8" />
<rect x="2549" y="912" width="21" height="18" fill="none" stroke="#1414e8" stroke-width="2" />
<circle cx="1521" cy="751" r="5.5" fill="#000"/>
<circle cx="1521" cy="1150" r="5.5" fill="#000"/>
<circle cx="1521" cy="1251" r="5.5" fill="#000"/>
<circle cx="2498" cy="1190.5" r="5.5" fill="#000"/>
<circle cx="2095" cy="772" r="5.5" fill="#000"/>
<rect x="553.75" y="1161.25" width="47.0" height="66.90000000000009" fill="#f8df98" stroke="#000" stroke-width="2.5" />
<text x="557" y="1154" font-size="19.5" fill="#000" font-family='"Liberation Sans", sans-serif' textLength="28.6" lengthAdjust="spacingAndGlyphs" stroke="#000" stroke-width="0.35">AI1</text>
<text x="574" y="1196" font-size="23" fill="#000" font-family='"Liberation Sans", sans-serif' text-anchor="middle" textLength="20" lengthAdjust="spacingAndGlyphs" >AI</text>
<rect x="552" y="1229" width="90" height="68" fill="#fffdd4" />
<text x="553.3" y="1255.6" font-size="22" fill="#000" font-family='"Liberation Sans", sans-serif' textLength="40.7" lengthAdjust="spacingAndGlyphs" >804</text>
<text x="553.3" y="1288.7" font-size="22" fill="#000" font-family='"Liberation Sans", sans-serif' textLength="52.7" lengthAdjust="spacingAndGlyphs" >1000</text>
<polyline points="698.5,1231 712.5,1231" fill="none" stroke="#2f6f2f" stroke-width="2" />
<rect x="713.75" y="1181.75" width="47.0" height="66.5" fill="#f8df98" stroke="#000" stroke-width="2.5" />
<text x="710" y="1173.6" font-size="19.5" fill="#000" font-family='"Liberation Sans", sans-serif' textLength="46" lengthAdjust="spacingAndGlyphs" stroke="#000" stroke-width="0.35">B010</text>
<text x="721.5" y="1209.1" font-size="25" fill="#000" font-family='"Liberation Sans", sans-serif' textLength="13" lengthAdjust="spacingAndGlyphs" >A</text>
<path d="M740.0,1202.2 h13.5 M746.5,1195.5 l7,6.7 l-7,6.7" fill="none" stroke="#000" stroke-width="2.2" />
<path d="M721.8,1222.2 h7 M728.7,1213.8 v17 l7.1,-8.5 z M735.8,1222.2 h7.5" fill="none" stroke="#000" stroke-width="2.2" />
<polyline points="938,1251 952,1251" fill="none" stroke="#2f6f2f" stroke-width="2" />
<rect x="953.25" y="1201.25" width="47.5" height="67.0" fill="#f8df98" stroke="#000" stroke-width="2.5" />
<text x="950" y="1193" font-size="19.5" fill="#000" font-family='"Liberation Sans", sans-serif' textLength="47" lengthAdjust="spacingAndGlyphs" stroke="#000" stroke-width="0.35">B013</text>
<text x="961" y="1228.6" font-size="25" fill="#000" font-family='"Liberation Sans", sans-serif' textLength="13" lengthAdjust="spacingAndGlyphs" >A</text>
<path d="M979.5,1221.7 h13.5 M986,1215 l7,6.7 l-7,6.7" fill="none" stroke="#000" stroke-width="2.2" />
<path d="M961.3,1241.7 h7 M968.2,1233.3 v17 l7.1,-8.5 z M975.3,1241.7 h7.5" fill="none" stroke="#000" stroke-width="2.2" />
<polyline points="1218,1271 1232,1271" fill="none" stroke="#2f6f2f" stroke-width="2" />
<rect x="1233.25" y="1221.25" width="47.5" height="67.0" fill="#f8df98" stroke="#e82020" stroke-width="2.5" />
<text x="1230" y="1212.5" font-size="19.5" fill="#000" font-family='"Liberation Sans", sans-serif' textLength="46" lengthAdjust="spacingAndGlyphs" stroke="#000" stroke-width="0.35">B012</text>
<path d="M1242.3,1243.3 l15.1,-14.55" fill="none" stroke="#000" stroke-width="2" />
<text x="1262" y="1241.5" font-size="25" fill="#000" font-family='"Liberation Sans", sans-serif' textLength="13" lengthAdjust="spacingAndGlyphs" >A</text>
<path d="M1240.2,1266.8 h7.1 v-16 h19.7 v16 h8.9" fill="none" stroke="#000" stroke-width="2.4" />
<polyline points="1558,1290.7 1572,1290.7" fill="none" stroke="#2f6f2f" stroke-width="2" />
<rect x="1573.25" y="1241.25" width="47.5" height="66.90000000000009" fill="#f8df98" stroke="#000" stroke-width="2.5" />
<text x="1570" y="1233" font-size="19.5" fill="#000" font-family='"Liberation Sans", sans-serif' textLength="46" lengthAdjust="spacingAndGlyphs" stroke="#000" stroke-width="0.35">B002</text>
<path d="M1581,1256.7 h14 M1588,1249.7 v14 M1597,1253.7 h15 M1597,1259.5 h15" fill="none" stroke="#000" stroke-width="2.4" />
<text x="1579.5" y="1288" font-size="25" fill="#000" font-family='"Liberation Sans", sans-serif' textLength="14" lengthAdjust="spacingAndGlyphs" >A</text>
<path d="M1600,1280.8 h14 M1608,1275 l6,5.8 l-6,5.8" fill="none" stroke="#000" stroke-width="2.2" />
<rect x="1753.25" y="1241.25" width="47.5" height="66.90000000000009" fill="#f8df98" stroke="#000" stroke-width="2.5" />
<text x="1752" y="1233" font-size="19.5" fill="#000" font-family='"Liberation Sans", sans-serif' textLength="41.7" lengthAdjust="spacingAndGlyphs" stroke="#000" stroke-width="0.35">AM1</text>
<text x="1779" y="1275.5" font-size="23" fill="#000" font-family='"Liberation Sans", sans-serif' text-anchor="middle" textLength="31" lengthAdjust="spacingAndGlyphs" >AM</text>
<polyline points="2018,1171.8 2032,1171.8" fill="none" stroke="#1414e8" stroke-width="2" />
<polyline points="2018,1211.5 2032,1211.5" fill="none" stroke="#2f6f2f" stroke-width="2" />
<rect x="2033.25" y="1141.75" width="47.5" height="74.5" fill="#f8df98" stroke="#000" stroke-width="2.5" />
<text x="2029" y="1133.4" font-size="19.5" fill="#000" font-family='"Liberation Sans", sans-serif' textLength="49" lengthAdjust="spacingAndGlyphs" stroke="#000" stroke-width="0.35">B004</text>
<rect x="2043" y="1161" width="23" height="1.5" fill="#000" />
<text x="2056.5" y="1187" font-size="22" fill="#000" font-family='"Liberation Sans", sans-serif' text-anchor="middle" textLength="26" lengthAdjust="spacingAndGlyphs" >Ax</text>
<rect x="2133.25" y="1141.75" width="47.5" height="67.0" fill="#f8df98" stroke="#000" stroke-width="2.5" />
<text x="2133" y="1133.4" font-size="19.5" fill="#000" font-family='"Liberation Sans", sans-serif' textLength="41.6" lengthAdjust="spacingAndGlyphs" stroke="#000" stroke-width="0.35">AM3</text>
<text x="2159" y="1176.5" font-size="23" fill="#000" font-family='"Liberation Sans", sans-serif' text-anchor="middle" textLength="31" lengthAdjust="spacingAndGlyphs" >AM</text>
<polyline points="2337.5,1211 2351.5,1211" fill="none" stroke="#2f6f2f" stroke-width="2" />
<rect x="2352.75" y="1161.75" width="47.5" height="67.0" fill="#f8df98" stroke="#e82020" stroke-width="2.5" />
<text x="2350" y="1154" font-size="19.5" fill="#000" font-family='"Liberation Sans", sans-serif' textLength="46" lengthAdjust="spacingAndGlyphs" stroke="#000" stroke-width="0.35">B001</text>
<path d="M2361.8,1183.8 l15.1,-14.55" fill="none" stroke="#000" stroke-width="2" />
<text x="2381.5" y="1182.0" font-size="25" fill="#000" font-family='"Liberation Sans", sans-serif' textLength="13" lengthAdjust="spacingAndGlyphs" >A</text>
<path d="M2359.7,1207.3 h7.1 v-16 h19.7 v16 h8.9" fill="none" stroke="#000" stroke-width="2.4" />
<polyline points="2677,1351 2691,1351" fill="none" stroke="#2f6f2f" stroke-width="2" />
<rect x="2692.25" y="1300.75" width="47.5" height="67.0" fill="#f8df98" stroke="#000" stroke-width="2.5" />
<text x="2689" y="1292.7" font-size="19.5" fill="#000" font-family='"Liberation Sans", sans-serif' textLength="47" lengthAdjust="spacingAndGlyphs" stroke="#000" stroke-width="0.35">B003</text>
<path d="M2700,1316.2 h14 M2707,1309.2 v14 M2716,1313.2 h15 M2716,1319.0 h15" fill="none" stroke="#000" stroke-width="2.4" />
<text x="2698.5" y="1347.5" font-size="25" fill="#000" font-family='"Liberation Sans", sans-serif' textLength="14" lengthAdjust="spacingAndGlyphs" >A</text>
<path d="M2719,1340.3 h14 M2727,1334.5 l6,5.8 l-6,5.8" fill="none" stroke="#000" stroke-width="2.2" />
<polyline points="2740,1330 2755,1330" fill="none" stroke="#000" stroke-width="3" />
<polyline points="1657.5,511 1671.5,511" fill="none" stroke="#1414e8" stroke-width="2" />
<polyline points="1657.5,531 1671.5,531" fill="none" stroke="#1414e8" stroke-width="2" />
<polyline points="1657.5,551.7 1671.5,551.7" fill="none" stroke="#2f6f2f" stroke-width="2" />
<rect x="1672.75" y="481.75" width="47.5" height="74.5" fill="#f8df98" stroke="#000" stroke-width="2.5" />
<text x="1670" y="474" font-size="19.5" fill="#000" font-family='"Liberation Sans", sans-serif' textLength="46" lengthAdjust="spacingAndGlyphs" stroke="#000" stroke-width="0.35">B009</text>
<path d="M1677,506 h5 v-15 h7 v15 h6" fill="none" stroke="#000" stroke-width="1.8" />
<circle cx="1707" cy="496" r="8" fill="none" stroke="#000" stroke-width="1.8"/>
<path d="M1707,490 v6 h5" fill="none" stroke="#000" stroke-width="1.5" />
<text x="1696.5" y="532" font-size="22" fill="#000" font-family='"Liberation Sans", sans-serif' text-anchor="middle" textLength="30" lengthAdjust="spacingAndGlyphs" >SW</text>
<polyline points="1657.5,771.7 1671.5,771.7" fill="none" stroke="#1414e8" stroke-width="2" />
<polyline points="1657.5,791 1671.5,791" fill="none" stroke="#2f6f2f" stroke-width="2" />
<rect x="1672.75" y="741.25" width="47.5" height="67.0" fill="#f8df98" stroke="#1414e8" stroke-width="2.5" />
<text x="1670" y="733" font-size="19.5" fill="#000" font-family='"Liberation Sans", sans-serif' textLength="46" lengthAdjust="spacingAndGlyphs" stroke="#000" stroke-width="0.35">B005</text>
<path d="M1679,781 h3 v-20 h5 v20 h4 v-20 h5 v20 h4 v-20 h5 v20 h4" fill="none" stroke="#000" stroke-width="1.8" />
<polyline points="1938.5,791 1952.5,791" fill="none" stroke="#1414e8" stroke-width="2" />
<polyline points="1938.5,811 1952.5,811" fill="none" stroke="#2f6f2f" stroke-width="2" />
<rect x="1953.75" y="741.25" width="47.5" height="75.0" fill="#f8df98" stroke="#1414e8" stroke-width="2.5" />
<text x="1949" y="733" font-size="19.5" fill="#000" font-family='"Liberation Sans", sans-serif' textLength="46" lengthAdjust="spacingAndGlyphs" stroke="#000" stroke-width="0.35">B006</text>
<path d="M1958.0,764.3 h7 v-14.3 h31" fill="none" stroke="#000" stroke-width="2.2" />
<path d="M1957.5,781 h14 M1964.5,774 v14 M1973.5,790 l10,-17 M1986.5,781 h10" fill="none" stroke="#000" stroke-width="2.2" />
<rect x="2113.25" y="621.75" width="47.5" height="67.0" fill="#f8df98" stroke="#1414e8" stroke-width="2.5" />
<text x="2119" y="613" font-size="19.5" fill="#000" font-family='"Liberation Sans", sans-serif' textLength="27" lengthAdjust="spacingAndGlyphs" stroke="#000" stroke-width="0.35">M1</text>
<text x="2138.75" y="657" font-size="23" fill="#000" font-family='"Liberation Sans", sans-serif' text-anchor="middle" textLength="16" lengthAdjust="spacingAndGlyphs" >M</text>
<polyline points="2397.5,671 2411.5,671" fill="none" stroke="#1414e8" stroke-width="2" />
<polyline points="2397.5,691 2411.5,691" fill="none" stroke="#1414e8" stroke-width="2" />
<rect x="2412.75" y="641.75" width="47.5" height="74.5" fill="#f8df98" stroke="#1414e8" stroke-width="2.5" />
<text x="2409" y="634" font-size="19.5" fill="#000" font-family='"Liberation Sans", sans-serif' textLength="46" lengthAdjust="spacingAndGlyphs" stroke="#000" stroke-width="0.35">B011</text>
<text x="2436" y="672" font-size="22" fill="#000" font-family='"Liberation Sans", sans-serif' text-anchor="middle" textLength="22" lengthAdjust="spacingAndGlyphs" >≥1</text>
<rect x="2293.25" y="821.75" width="47.5" height="67.0" fill="#f8df98" stroke="#1414e8" stroke-width="2.5" />
<text x="2288" y="813" font-size="19.5" fill="#000" font-family='"Liberation Sans", sans-serif' textLength="49.5" lengthAdjust="spacingAndGlyphs" stroke="#000" stroke-width="0.35">B014</text>
<text x="2325" y="845" font-size="20" fill="#000" font-family='"Liberation Sans", sans-serif' text-anchor="middle" >1</text>
<polyline points="2618,751 2632,751" fill="none" stroke="#1414e8" stroke-width="2" />
<polyline points="2618,791 2632,791" fill="none" stroke="#1414e8" stroke-width="2" />
<polyline points="2618,811.5 2632,811.5" fill="none" stroke="#2f6f2f" stroke-width="2" />
<rect x="2633.25" y="741.25" width="47.5" height="75.0" fill="#f8df98" stroke="#e82020" stroke-width="2.5" />
<text x="2629" y="733" font-size="19.5" fill="#000" font-family='"Liberation Sans", sans-serif' textLength="46" lengthAdjust="spacingAndGlyphs" stroke="#000" stroke-width="0.35">B007</text>
<path d="M2637.5,764.3 h7 v-14.3 h31" fill="none" stroke="#000" stroke-width="2.2" />
<path d="M2637,781 h14 M2644,774 v14 M2653,790 l10,-17 M2666,781 h10" fill="none" stroke="#000" stroke-width="2.2" />
<polyline points="2957.5,811 2971.5,811" fill="none" stroke="#2f6f2f" stroke-width="2" />
<rect x="2972.75" y="761.75" width="47.5" height="67.0" fill="#f8df98" stroke="#000" stroke-width="2.5" />
<text x="2968.5" y="753" font-size="19.5" fill="#000" font-family='"Liberation Sans", sans-serif' textLength="47" lengthAdjust="spacingAndGlyphs" stroke="#000" stroke-width="0.35">B008</text>
<path d="M2980.5,777.2 h14 M2987.5,770.2 v14 M2996.5,774.2 h15 M2996.5,780.0 h15" fill="none" stroke="#000" stroke-width="2.4" />
<text x="2979.0" y="808.5" font-size="25" fill="#000" font-family='"Liberation Sans", sans-serif' textLength="14" lengthAdjust="spacingAndGlyphs" >A</text>
<path d="M2999.5,801.3 h14 M3007.5,795.5 l6,5.8 l-6,5.8" fill="none" stroke="#000" stroke-width="2.2" />
<rect x="3213.25" y="761.75" width="47.5" height="67.0" fill="#f8df98" stroke="#000" stroke-width="2.5" />
<text x="3213" y="753" font-size="19.5" fill="#000" font-family='"Liberation Sans", sans-serif' textLength="40" lengthAdjust="spacingAndGlyphs" stroke="#000" stroke-width="0.35">AM2</text>
<text x="3239" y="796.5" font-size="23" fill="#000" font-family='"Liberation Sans", sans-serif' text-anchor="middle" textLength="31" lengthAdjust="spacingAndGlyphs" >AM</text>
<rect x="729" y="1257" width="17" height="17" fill="#f0f0f0" stroke="#909090" stroke-width="2" rx="2" />
<rect x="733" y="1264.5" width="9" height="2.0" fill="#3050b0" />
<rect x="969" y="1277" width="17" height="17" fill="#f0f0f0" stroke="#909090" stroke-width="2" rx="2" />
<rect x="973" y="1284.5" width="9" height="2.0" fill="#3050b0" />
<rect x="1249" y="1297" width="17" height="17" fill="#f0f0f0" stroke="#909090" stroke-width="2" rx="2" />
<rect x="1253" y="1304.5" width="9" height="2.0" fill="#3050b0" />
<rect x="1588" y="1316" width="17" height="17" fill="#f0f0f0" stroke="#909090" stroke-width="2" rx="2" />
<rect x="1592" y="1323.5" width="9" height="2.0" fill="#3050b0" />
<rect x="2049" y="1225" width="17" height="17" fill="#f0f0f0" stroke="#909090" stroke-width="2" rx="2" />
<rect x="2053" y="1232.5" width="9" height="2.0" fill="#3050b0" />
<rect x="2369" y="1238" width="17" height="17" fill="#f0f0f0" stroke="#909090" stroke-width="2" rx="2" />
<rect x="2373" y="1245.5" width="9" height="2.0" fill="#3050b0" />
<rect x="2709" y="1377" width="17" height="17" fill="#f0f0f0" stroke="#909090" stroke-width="2" rx="2" />
<rect x="2713" y="1384.5" width="9" height="2.0" fill="#3050b0" />
<rect x="1688" y="565" width="17" height="17" fill="#f0f0f0" stroke="#909090" stroke-width="2" rx="2" />
<rect x="1692" y="572.5" width="9" height="2.0" fill="#3050b0" />
<rect x="1688" y="817.5" width="17" height="17.0" fill="#f0f0f0" stroke="#909090" stroke-width="2" rx="2" />
<rect x="1692" y="825.0" width="9" height="2.0" fill="#3050b0" />
<rect x="1970" y="825" width="17" height="17" fill="#f0f0f0" stroke="#909090" stroke-width="2" rx="2" />
<rect x="1974" y="832.5" width="9" height="2.0" fill="#3050b0" />
<rect x="2649" y="825" width="17" height="17" fill="#f0f0f0" stroke="#909090" stroke-width="2" rx="2" />
<rect x="2653" y="832.5" width="9" height="2.0" fill="#3050b0" />
<rect x="2989" y="837.4" width="17" height="17.0" fill="#f0f0f0" stroke="#909090" stroke-width="2" rx="2" />
<rect x="2993" y="844.9" width="9" height="2.0" fill="#3050b0" />
<rect x="639" y="1283" width="197" height="28" fill="none" stroke="#a0a0a0" stroke-width="2" />
<rect x="734" y="1283" width="2" height="28" fill="#a0a0a0" />
<text x="724.5" y="1304" font-size="21" fill="#3850c0" font-family='"Liberation Sans", sans-serif' text-anchor="end" textLength="23" lengthAdjust="spacingAndGlyphs" >Ax:</text>
<text x="742" y="1304" font-size="20" fill="#d82838" font-family='"Liberation Sans", sans-serif' textLength="37" lengthAdjust="spacingAndGlyphs" >804</text>
<polyline points="836,1297.0 850,1297.0" fill="none" stroke="#000" stroke-width="3.5" />
<rect x="879" y="1303" width="197" height="28" fill="none" stroke="#a0a0a0" stroke-width="2" />
<rect x="973.5" y="1303" width="2.0" height="28" fill="#a0a0a0" />
<text x="964.0" y="1324" font-size="21" fill="#3850c0" font-family='"Liberation Sans", sans-serif' text-anchor="end" textLength="23" lengthAdjust="spacingAndGlyphs" >Ax:</text>
<text x="981.5" y="1324" font-size="20" fill="#d82838" font-family='"Liberation Sans", sans-serif' textLength="23" lengthAdjust="spacingAndGlyphs" >85</text>
<polyline points="1076,1317.0 1090,1317.0" fill="none" stroke="#000" stroke-width="3.5" />
<rect x="1159" y="1323" width="196" height="84" fill="none" stroke="#a0a0a0" stroke-width="2" />
<rect x="1253.4" y="1323" width="2.0" height="84" fill="#a0a0a0" />
<rect x="1159" y="1350" width="196" height="2" fill="#a0a0a0" />
<rect x="1159" y="1378" width="196" height="2" fill="#a0a0a0" />
<text x="1243.9" y="1344" font-size="21" fill="#3850c0" font-family='"Liberation Sans", sans-serif' text-anchor="end" textLength="25" lengthAdjust="spacingAndGlyphs" >On:</text>
<text x="1261.4" y="1344" font-size="20" fill="#d82838" font-family='"Liberation Sans", sans-serif' textLength="11" lengthAdjust="spacingAndGlyphs" >5</text>
<text x="1243.9" y="1372" font-size="21" fill="#3850c0" font-family='"Liberation Sans", sans-serif' text-anchor="end" textLength="27" lengthAdjust="spacingAndGlyphs" >Off:</text>
<text x="1261.4" y="1372" font-size="20" fill="#d82838" font-family='"Liberation Sans", sans-serif' textLength="11" lengthAdjust="spacingAndGlyphs" >5</text>
<text x="1243.9" y="1400" font-size="21" fill="#3850c0" font-family='"Liberation Sans", sans-serif' text-anchor="end" textLength="23" lengthAdjust="spacingAndGlyphs" >Ax:</text>
<text x="1261.4" y="1400" font-size="20" fill="#d82838" font-family='"Liberation Sans", sans-serif' textLength="23" lengthAdjust="spacingAndGlyphs" >85</text>
<polyline points="1355,1393.0 1369,1393.0" fill="none" stroke="#000" stroke-width="3.5" />
<polyline points="1145,1337.0 1159,1337.0" fill="none" stroke="#000" stroke-width="3.5" />
<polyline points="1145,1365.0 1159,1365.0" fill="none" stroke="#000" stroke-width="3.5" />
<rect x="1498.5" y="1342" width="197.0" height="140" fill="none" stroke="#a0a0a0" stroke-width="2" />
<rect x="1594" y="1342" width="2" height="140" fill="#a0a0a0" />
<rect x="1498.5" y="1369" width="197.0" height="2" fill="#a0a0a0" />
<rect x="1498.5" y="1397" width="197.0" height="2" fill="#a0a0a0" />
<rect x="1498.5" y="1425" width="197.0" height="2" fill="#a0a0a0" />
<rect x="1498.5" y="1453" width="197.0" height="2" fill="#a0a0a0" />
<text x="1584.5" y="1363" font-size="21" fill="#3850c0" font-family='"Liberation Sans", sans-serif' text-anchor="end" textLength="25" lengthAdjust="spacingAndGlyphs" >Aq:</text>
<text x="1602" y="1363" font-size="20" fill="#d82838" font-family='"Liberation Sans", sans-serif' textLength="23" lengthAdjust="spacingAndGlyphs" >85</text>
<text x="1584.5" y="1391" font-size="21" fill="#3850c0" font-family='"Liberation Sans", sans-serif' text-anchor="end" textLength="23" lengthAdjust="spacingAndGlyphs" >P1:</text>
<text x="1602" y="1391" font-size="20" fill="#d82838" font-family='"Liberation Sans", sans-serif' textLength="23" lengthAdjust="spacingAndGlyphs" >85</text>
<text x="1584.5" y="1419" font-size="21" fill="#3850c0" font-family='"Liberation Sans", sans-serif' text-anchor="end" textLength="23" lengthAdjust="spacingAndGlyphs" >P2:</text>
<text x="1602" y="1419" font-size="20" fill="#3850c0" font-family='"Liberation Sans", sans-serif' textLength="11" lengthAdjust="spacingAndGlyphs" >0</text>
<text x="1584.5" y="1447" font-size="21" fill="#3850c0" font-family='"Liberation Sans", sans-serif' text-anchor="end" textLength="23" lengthAdjust="spacingAndGlyphs" >P3:</text>
<text x="1602" y="1447" font-size="20" fill="#3850c0" font-family='"Liberation Sans", sans-serif' textLength="11" lengthAdjust="spacingAndGlyphs" >0</text>
<text x="1584.5" y="1475" font-size="21" fill="#3850c0" font-family='"Liberation Sans", sans-serif' text-anchor="end" textLength="23" lengthAdjust="spacingAndGlyphs" >P4:</text>
<text x="1602" y="1475" font-size="20" fill="#3850c0" font-family='"Liberation Sans", sans-serif' textLength="11" lengthAdjust="spacingAndGlyphs" >0</text>
<polyline points="1695.5,1356.0 1709.5,1356.0" fill="none" stroke="#000" stroke-width="3.5" />
<polyline points="1484.5,1384.0 1498.5,1384.0" fill="none" stroke="#000" stroke-width="3.5" />
<polyline points="1484.5,1412.0 1498.5,1412.0" fill="none" stroke="#000" stroke-width="3.5" />
<polyline points="1484.5,1440.0 1498.5,1440.0" fill="none" stroke="#000" stroke-width="3.5" />
<polyline points="1484.5,1468.0 1498.5,1468.0" fill="none" stroke="#000" stroke-width="3.5" />
<rect x="1970.5" y="1251" width="172.5" height="28" fill="none" stroke="#a0a0a0" stroke-width="2" />
<rect x="2053.5" y="1251" width="2.0" height="28" fill="#a0a0a0" />
<text x="2044.0" y="1272" font-size="21" fill="#3850c0" font-family='"Liberation Sans", sans-serif' text-anchor="end" textLength="26" lengthAdjust="spacingAndGlyphs" >Aq:</text>
<text x="2061.5" y="1272" font-size="20" fill="#d82838" font-family='"Liberation Sans", sans-serif' textLength="23" lengthAdjust="spacingAndGlyphs" >85</text>
<polyline points="2143,1265.0 2157,1265.0" fill="none" stroke="#000" stroke-width="3.5" />
<rect x="2279" y="1262.4" width="195.5999999999999" height="84.0" fill="none" stroke="#a0a0a0" stroke-width="2" />
<rect x="2373.7" y="1262.4" width="2.0" height="84.0" fill="#a0a0a0" />
<rect x="2279" y="1289.4" width="195.5999999999999" height="2.0" fill="#a0a0a0" />
<rect x="2279" y="1317.4" width="195.5999999999999" height="2.0" fill="#a0a0a0" />
<text x="2364.2" y="1283.4" font-size="21" fill="#3850c0" font-family='"Liberation Sans", sans-serif' text-anchor="end" textLength="25" lengthAdjust="spacingAndGlyphs" >On:</text>
<text x="2381.7" y="1283.4" font-size="20" fill="#d82838" font-family='"Liberation Sans", sans-serif' textLength="9" lengthAdjust="spacingAndGlyphs" >1</text>
<text x="2364.2" y="1311.4" font-size="21" fill="#3850c0" font-family='"Liberation Sans", sans-serif' text-anchor="end" textLength="26" lengthAdjust="spacingAndGlyphs" >Off:</text>
<text x="2381.7" y="1311.4" font-size="20" fill="#3850c0" font-family='"Liberation Sans", sans-serif' textLength="11" lengthAdjust="spacingAndGlyphs" >0</text>
<text x="2364.2" y="1339.4" font-size="21" fill="#3850c0" font-family='"Liberation Sans", sans-serif' text-anchor="end" textLength="22" lengthAdjust="spacingAndGlyphs" >Ax:</text>
<text x="2381.7" y="1339.4" font-size="20" fill="#d82838" font-family='"Liberation Sans", sans-serif' textLength="23" lengthAdjust="spacingAndGlyphs" >85</text>
<polyline points="2474.6,1332.4 2488.6,1332.4" fill="none" stroke="#000" stroke-width="3.5" />
<polyline points="2265,1276.4 2279,1276.4" fill="none" stroke="#000" stroke-width="3.5" />
<polyline points="2265,1304.4 2279,1304.4" fill="none" stroke="#000" stroke-width="3.5" />
<rect x="2619" y="1403" width="196" height="140" fill="none" stroke="#a0a0a0" stroke-width="2" />
<rect x="2713" y="1403" width="2" height="140" fill="#a0a0a0" />
<rect x="2619" y="1430" width="196" height="2" fill="#a0a0a0" />
<rect x="2619" y="1458" width="196" height="2" fill="#a0a0a0" />
<rect x="2619" y="1486" width="196" height="2" fill="#a0a0a0" />
<rect x="2619" y="1514" width="196" height="2" fill="#a0a0a0" />
<text x="2703.5" y="1424" font-size="21" fill="#3850c0" font-family='"Liberation Sans", sans-serif' text-anchor="end" textLength="25" lengthAdjust="spacingAndGlyphs" >Aq:</text>
<text x="2721" y="1424" font-size="20" fill="#d82838" font-family='"Liberation Sans", sans-serif' textLength="22" lengthAdjust="spacingAndGlyphs" >12</text>
<text x="2703.5" y="1452" font-size="21" fill="#3850c0" font-family='"Liberation Sans", sans-serif' text-anchor="end" textLength="23" lengthAdjust="spacingAndGlyphs" >P1:</text>
<text x="2721" y="1452" font-size="20" fill="#d82838" font-family='"Liberation Sans", sans-serif' textLength="45" lengthAdjust="spacingAndGlyphs" >1000</text>
<text x="2703.5" y="1480" font-size="21" fill="#3850c0" font-family='"Liberation Sans", sans-serif' text-anchor="end" textLength="23" lengthAdjust="spacingAndGlyphs" >P2:</text>
<text x="2721" y="1480" font-size="20" fill="#d82838" font-family='"Liberation Sans", sans-serif' textLength="23" lengthAdjust="spacingAndGlyphs" >85</text>
<text x="2703.5" y="1508" font-size="21" fill="#3850c0" font-family='"Liberation Sans", sans-serif' text-anchor="end" textLength="23" lengthAdjust="spacingAndGlyphs" >P3:</text>
<text x="2721" y="1508" font-size="20" fill="#3850c0" font-family='"Liberation Sans", sans-serif' textLength="11" lengthAdjust="spacingAndGlyphs" >0</text>
<text x="2703.5" y="1536" font-size="21" fill="#3850c0" font-family='"Liberation Sans", sans-serif' text-anchor="end" textLength="23" lengthAdjust="spacingAndGlyphs" >P4:</text>
<text x="2721" y="1536" font-size="20" fill="#3850c0" font-family='"Liberation Sans", sans-serif' textLength="11" lengthAdjust="spacingAndGlyphs" >0</text>
<polyline points="2815,1417.0 2829,1417.0" fill="none" stroke="#000" stroke-width="3.5" />
<polyline points="2605,1445.0 2619,1445.0" fill="none" stroke="#000" stroke-width="3.5" />
<polyline points="2605,1473.0 2619,1473.0" fill="none" stroke="#000" stroke-width="3.5" />
<polyline points="2605,1501.0 2619,1501.0" fill="none" stroke="#000" stroke-width="3.5" />
<polyline points="2605,1529.0 2619,1529.0" fill="none" stroke="#000" stroke-width="3.5" />
<rect x="1598.7" y="591" width="196.70000000000005" height="28" fill="none" stroke="#a0a0a0" stroke-width="2" />
<rect x="1693.6" y="591" width="2.0" height="28" fill="#a0a0a0" />
<text x="1684.1" y="612" font-size="21" fill="#3850c0" font-family='"Liberation Sans", sans-serif' text-anchor="end" textLength="25" lengthAdjust="spacingAndGlyphs" >Aq:</text>
<text x="1701.6" y="612" font-size="20" fill="#3850c0" font-family='"Liberation Sans", sans-serif' textLength="11" lengthAdjust="spacingAndGlyphs" >0</text>
<polyline points="1795.4,605.0 1809.4,605.0" fill="none" stroke="#000" stroke-width="3.5" />
<rect x="1585" y="842.5" width="224" height="84.0" fill="none" stroke="#a0a0a0" stroke-width="2" />
<rect x="1693.6" y="842.5" width="2.0" height="84.0" fill="#a0a0a0" />
<rect x="1585" y="869.5" width="224" height="2.0" fill="#a0a0a0" />
<rect x="1585" y="897.5" width="224" height="2.0" fill="#a0a0a0" />
<text x="1684.1" y="863.5" font-size="21" fill="#3850c0" font-family='"Liberation Sans", sans-serif' text-anchor="end" textLength="25" lengthAdjust="spacingAndGlyphs" >Ta:</text>
<text x="1701.6" y="863.5" font-size="20" fill="#d82838" font-family='"Liberation Sans", sans-serif' textLength="72" lengthAdjust="spacingAndGlyphs" >00:18m</text>
<text x="1684.1" y="891.5" font-size="21" fill="#3850c0" font-family='"Liberation Sans", sans-serif' text-anchor="end" textLength="26" lengthAdjust="spacingAndGlyphs" >TH:</text>
<text x="1701.6" y="891.5" font-size="20" fill="#d82838" font-family='"Liberation Sans", sans-serif' textLength="64" lengthAdjust="spacingAndGlyphs" >00:03s</text>
<text x="1684.1" y="919.5" font-size="21" fill="#3850c0" font-family='"Liberation Sans", sans-serif' text-anchor="end" textLength="25" lengthAdjust="spacingAndGlyphs" >TL:</text>
<text x="1701.6" y="919.5" font-size="20" fill="#d82838" font-family='"Liberation Sans", sans-serif' textLength="72" lengthAdjust="spacingAndGlyphs" >01:00m</text>
<polyline points="1809,856.5 1823,856.5" fill="none" stroke="#000" stroke-width="3.5" />
<polyline points="1571,884.5 1585,884.5" fill="none" stroke="#000" stroke-width="3.5" />
<polyline points="1571,912.5 1585,912.5" fill="none" stroke="#000" stroke-width="3.5" />
<rect x="1891" y="851.7" width="172" height="83.39999999999998" fill="none" stroke="#a0a0a0" stroke-width="2" />
<rect x="1973.6" y="851.7" width="2.0" height="83.39999999999998" fill="#a0a0a0" />
<rect x="1891" y="878.5" width="172" height="2.0" fill="#a0a0a0" />
<rect x="1891" y="906.3000000000001" width="172" height="2.0" fill="#a0a0a0" />
<text x="1964.1" y="872.7" font-size="21" fill="#3850c0" font-family='"Liberation Sans", sans-serif' text-anchor="end" textLength="29" lengthAdjust="spacingAndGlyphs" >Cnt:</text>
<text x="1981.6" y="872.7" font-size="20" fill="#d82838" font-family='"Liberation Sans", sans-serif' textLength="11" lengthAdjust="spacingAndGlyphs" >2</text>
<text x="1964.1" y="900.5" font-size="21" fill="#3850c0" font-family='"Liberation Sans", sans-serif' text-anchor="end" textLength="25" lengthAdjust="spacingAndGlyphs" >On:</text>
<text x="1981.6" y="900.5" font-size="20" fill="#d82838" font-family='"Liberation Sans", sans-serif' textLength="22" lengthAdjust="spacingAndGlyphs" >12</text>
<text x="1964.1" y="928.3000000000001" font-size="21" fill="#3850c0" font-family='"Liberation Sans", sans-serif' text-anchor="end" textLength="27" lengthAdjust="spacingAndGlyphs" >Off:</text>
<text x="1981.6" y="928.3000000000001" font-size="20" fill="#3850c0" font-family='"Liberation Sans", sans-serif' textLength="11" lengthAdjust="spacingAndGlyphs" >0</text>
<polyline points="2063,865.6 2077,865.6" fill="none" stroke="#000" stroke-width="3.5" />
<polyline points="1877,893.4 1891,893.4" fill="none" stroke="#000" stroke-width="3.5" />
<polyline points="1877,921.2 1891,921.2" fill="none" stroke="#000" stroke-width="3.5" />
<rect x="2571" y="851" width="171.5999999999999" height="84" fill="none" stroke="#a0a0a0" stroke-width="2" />
<rect x="2653.4" y="851" width="2.0" height="84" fill="#a0a0a0" />
<rect x="2571" y="878" width="171.5999999999999" height="2" fill="#a0a0a0" />
<rect x="2571" y="906" width="171.5999999999999" height="2" fill="#a0a0a0" />
<text x="2643.9" y="872" font-size="21" fill="#3850c0" font-family='"Liberation Sans", sans-serif' text-anchor="end" textLength="29" lengthAdjust="spacingAndGlyphs" >Cnt:</text>
<text x="2661.4" y="872" font-size="20" fill="#3850c0" font-family='"Liberation Sans", sans-serif' textLength="11" lengthAdjust="spacingAndGlyphs" >0</text>
<text x="2643.9" y="900" font-size="21" fill="#3850c0" font-family='"Liberation Sans", sans-serif' text-anchor="end" textLength="25" lengthAdjust="spacingAndGlyphs" >On:</text>
<text x="2661.4" y="900" font-size="20" fill="#3850c0" font-family='"Liberation Sans", sans-serif' textLength="11" lengthAdjust="spacingAndGlyphs" >0</text>
<text x="2643.9" y="928" font-size="21" fill="#3850c0" font-family='"Liberation Sans", sans-serif' text-anchor="end" textLength="27" lengthAdjust="spacingAndGlyphs" >Off:</text>
<text x="2661.4" y="928" font-size="20" fill="#3850c0" font-family='"Liberation Sans", sans-serif' textLength="11" lengthAdjust="spacingAndGlyphs" >0</text>
<polyline points="2742.6,865.0 2756.6,865.0" fill="none" stroke="#000" stroke-width="3.5" />
<polyline points="2557,893.0 2571,893.0" fill="none" stroke="#000" stroke-width="3.5" />
<polyline points="2557,921.0 2571,921.0" fill="none" stroke="#000" stroke-width="3.5" />
<rect x="2899" y="863" width="195.4000000000001" height="140" fill="none" stroke="#a0a0a0" stroke-width="2" />
<rect x="2993" y="863" width="2" height="140" fill="#a0a0a0" />
<rect x="2899" y="890" width="195.4000000000001" height="2" fill="#a0a0a0" />
<rect x="2899" y="918" width="195.4000000000001" height="2" fill="#a0a0a0" />
<rect x="2899" y="946" width="195.4000000000001" height="2" fill="#a0a0a0" />
<rect x="2899" y="974" width="195.4000000000001" height="2" fill="#a0a0a0" />
<text x="2983.5" y="884" font-size="21" fill="#3850c0" font-family='"Liberation Sans", sans-serif' text-anchor="end" textLength="24" lengthAdjust="spacingAndGlyphs" >Aq:</text>
<text x="3001" y="884" font-size="20" fill="#3850c0" font-family='"Liberation Sans", sans-serif' textLength="11" lengthAdjust="spacingAndGlyphs" >0</text>
<text x="2983.5" y="912" font-size="21" fill="#3850c0" font-family='"Liberation Sans", sans-serif' text-anchor="end" textLength="24" lengthAdjust="spacingAndGlyphs" >P1:</text>
<text x="3001" y="912" font-size="20" fill="#3850c0" font-family='"Liberation Sans", sans-serif' textLength="11" lengthAdjust="spacingAndGlyphs" >0</text>
<text x="2983.5" y="940" font-size="21" fill="#3850c0" font-family='"Liberation Sans", sans-serif' text-anchor="end" textLength="24" lengthAdjust="spacingAndGlyphs" >P2:</text>
<text x="3001" y="940" font-size="20" fill="#3850c0" font-family='"Liberation Sans", sans-serif' textLength="11" lengthAdjust="spacingAndGlyphs" >0</text>
<text x="2983.5" y="968" font-size="21" fill="#3850c0" font-family='"Liberation Sans", sans-serif' text-anchor="end" textLength="24" lengthAdjust="spacingAndGlyphs" >P3:</text>
<text x="3001" y="968" font-size="20" fill="#3850c0" font-family='"Liberation Sans", sans-serif' textLength="11" lengthAdjust="spacingAndGlyphs" >0</text>
<text x="2983.5" y="996" font-size="21" fill="#3850c0" font-family='"Liberation Sans", sans-serif' text-anchor="end" textLength="24" lengthAdjust="spacingAndGlyphs" >P4:</text>
<text x="3001" y="996" font-size="20" fill="#3850c0" font-family='"Liberation Sans", sans-serif' textLength="11" lengthAdjust="spacingAndGlyphs" >0</text>
<polyline points="3094.4,877.0 3108.4,877.0" fill="none" stroke="#000" stroke-width="3.5" />
<polyline points="2885,905.0 2899,905.0" fill="none" stroke="#000" stroke-width="3.5" />
<polyline points="2885,933.0 2899,933.0" fill="none" stroke="#000" stroke-width="3.5" />
<polyline points="2885,961.0 2899,961.0" fill="none" stroke="#000" stroke-width="3.5" />
<polyline points="2885,989.0 2899,989.0" fill="none" stroke="#000" stroke-width="3.5" />
<text x="713" y="1335" font-size="19.5" fill="#2f6f2f" font-family='"Liberation Sans", sans-serif' textLength="110" lengthAdjust="spacingAndGlyphs" stroke="#2f6f2f" stroke-width="0.45">Gain =0.8+</text>
<text x="713" y="1363" font-size="19.5" fill="#2f6f2f" font-family='"Liberation Sans", sans-serif' textLength="77" lengthAdjust="spacingAndGlyphs" stroke="#2f6f2f" stroke-width="0.45">Offset=4</text>
<text x="713" y="1391" font-size="19.5" fill="#2f6f2f" font-family='"Liberation Sans", sans-serif' textLength="77" lengthAdjust="spacingAndGlyphs" stroke="#2f6f2f" stroke-width="0.45">Point=0</text>
<text x="953" y="1355" font-size="19.5" fill="#2f6f2f" font-family='"Liberation Sans", sans-serif' textLength="109" lengthAdjust="spacingAndGlyphs" stroke="#2f6f2f" stroke-width="0.45">Gain =0.1+</text>
<text x="953" y="1383" font-size="19.5" fill="#2f6f2f" font-family='"Liberation Sans", sans-serif' textLength="76" lengthAdjust="spacingAndGlyphs" stroke="#2f6f2f" stroke-width="0.45">Offset=5</text>
<text x="953" y="1411" font-size="19.5" fill="#2f6f2f" font-family='"Liberation Sans", sans-serif' textLength="77" lengthAdjust="spacingAndGlyphs" stroke="#2f6f2f" stroke-width="0.45">Point=0</text>
<text x="1233.5" y="1430.7" font-size="19.5" fill="#2f6f2f" font-family='"Liberation Sans", sans-serif' textLength="97" lengthAdjust="spacingAndGlyphs" stroke="#2f6f2f" stroke-width="0.45">Gain=1.0+</text>
<text x="1233.5" y="1458.7" font-size="19.5" fill="#2f6f2f" font-family='"Liberation Sans", sans-serif' textLength="75" lengthAdjust="spacingAndGlyphs" stroke="#2f6f2f" stroke-width="0.45">Offset=0</text>
<text x="1233.5" y="1486.7" font-size="19.5" fill="#2f6f2f" font-family='"Liberation Sans", sans-serif' textLength="49" lengthAdjust="spacingAndGlyphs" stroke="#2f6f2f" stroke-width="0.45">On=5</text>
<text x="1233.5" y="1514.7" font-size="19.5" fill="#2f6f2f" font-family='"Liberation Sans", sans-serif' textLength="49" lengthAdjust="spacingAndGlyphs" stroke="#2f6f2f" stroke-width="0.45">Off=5</text>
<text x="1233.5" y="1542.7" font-size="19.5" fill="#2f6f2f" font-family='"Liberation Sans", sans-serif' textLength="70" lengthAdjust="spacingAndGlyphs" stroke="#2f6f2f" stroke-width="0.45">Point=0</text>
<text x="1572.6" y="1507" font-size="19.5" fill="#2f6f2f" font-family='"Liberation Sans", sans-serif' textLength="85" lengthAdjust="spacingAndGlyphs" stroke="#2f6f2f" stroke-width="0.45">V1=B12+</text>
<text x="1572.6" y="1535" font-size="19.5" fill="#2f6f2f" font-family='"Liberation Sans", sans-serif' textLength="48" lengthAdjust="spacingAndGlyphs" stroke="#2f6f2f" stroke-width="0.45">V2=0</text>
<text x="1572.6" y="1563" font-size="19.5" fill="#2f6f2f" font-family='"Liberation Sans", sans-serif' textLength="48" lengthAdjust="spacingAndGlyphs" stroke="#2f6f2f" stroke-width="0.45">V3=0</text>
<text x="1572.6" y="1591" font-size="19.5" fill="#2f6f2f" font-family='"Liberation Sans", sans-serif' textLength="48" lengthAdjust="spacingAndGlyphs" stroke="#2f6f2f" stroke-width="0.45">V4=0</text>
<text x="1572.6" y="1619" font-size="19.5" fill="#2f6f2f" font-family='"Liberation Sans", sans-serif' textLength="72" lengthAdjust="spacingAndGlyphs" stroke="#2f6f2f" stroke-width="0.45">Point=0</text>
<text x="1572.6" y="1647" font-size="19.5" fill="#2f6f2f" font-family='"Liberation Sans", sans-serif' textLength="131" lengthAdjust="spacingAndGlyphs" stroke="#2f6f2f" stroke-width="0.45">((B12+0)+0)+0</text>
<text x="2033" y="1304" font-size="19.5" fill="#2f6f2f" font-family='"Liberation Sans", sans-serif' textLength="90" lengthAdjust="spacingAndGlyphs" stroke="#2f6f2f" stroke-width="0.45">Rem = on</text>
<text x="2033" y="1332" font-size="19.5" fill="#2f6f2f" font-family='"Liberation Sans", sans-serif' textLength="71" lengthAdjust="spacingAndGlyphs" stroke="#2f6f2f" stroke-width="0.45">ST = 5s</text>
<text x="2033" y="1360" font-size="19.5" fill="#2f6f2f" font-family='"Liberation Sans", sans-serif' textLength="62" lengthAdjust="spacingAndGlyphs" stroke="#2f6f2f" stroke-width="0.45">SN = 6</text>
<text x="2353" y="1371" font-size="19.5" fill="#2f6f2f" font-family='"Liberation Sans", sans-serif' textLength="96" lengthAdjust="spacingAndGlyphs" stroke="#2f6f2f" stroke-width="0.45">Gain=1.0+</text>
<text x="2353" y="1399" font-size="19.5" fill="#2f6f2f" font-family='"Liberation Sans", sans-serif' textLength="75" lengthAdjust="spacingAndGlyphs" stroke="#2f6f2f" stroke-width="0.45">Offset=0</text>
<text x="2353" y="1427" font-size="19.5" fill="#2f6f2f" font-family='"Liberation Sans", sans-serif' textLength="49" lengthAdjust="spacingAndGlyphs" stroke="#2f6f2f" stroke-width="0.45">On=1</text>
<text x="2353" y="1455" font-size="19.5" fill="#2f6f2f" font-family='"Liberation Sans", sans-serif' textLength="49" lengthAdjust="spacingAndGlyphs" stroke="#2f6f2f" stroke-width="0.45">Off=0</text>
<text x="2353" y="1483" font-size="19.5" fill="#2f6f2f" font-family='"Liberation Sans", sans-serif' textLength="71" lengthAdjust="spacingAndGlyphs" stroke="#2f6f2f" stroke-width="0.45">Point=0</text>
<text x="2692" y="1568" font-size="19.5" fill="#2f6f2f" font-family='"Liberation Sans", sans-serif' textLength="96" lengthAdjust="spacingAndGlyphs" stroke="#2f6f2f" stroke-width="0.45">V1=1000+</text>
<text x="2692" y="1596" font-size="19.5" fill="#2f6f2f" font-family='"Liberation Sans", sans-serif' textLength="64" lengthAdjust="spacingAndGlyphs" stroke="#2f6f2f" stroke-width="0.45">V2=B4</text>
<text x="2692" y="1624" font-size="19.5" fill="#2f6f2f" font-family='"Liberation Sans", sans-serif' textLength="48" lengthAdjust="spacingAndGlyphs" stroke="#2f6f2f" stroke-width="0.45">V3=0</text>
<text x="2692" y="1652" font-size="19.5" fill="#2f6f2f" font-family='"Liberation Sans", sans-serif' textLength="48" lengthAdjust="spacingAndGlyphs" stroke="#2f6f2f" stroke-width="0.45">V4=0</text>
<text x="2692" y="1680" font-size="19.5" fill="#2f6f2f" font-family='"Liberation Sans", sans-serif' textLength="72" lengthAdjust="spacingAndGlyphs" stroke="#2f6f2f" stroke-width="0.45">Point=0</text>
<text x="2692" y="1708" font-size="19.5" fill="#2f6f2f" font-family='"Liberation Sans", sans-serif' textLength="150" lengthAdjust="spacingAndGlyphs" stroke="#2f6f2f" stroke-width="0.45">((1000/B4)+0)+0</text>
<text x="1673" y="643.0" font-size="19.5" fill="#2f6f2f" font-family='"Liberation Sans", sans-serif' textLength="90" lengthAdjust="spacingAndGlyphs" stroke="#2f6f2f" stroke-width="0.45">Rem = on</text>
<text x="1673" y="671.7" font-size="19.5" fill="#2f6f2f" font-family='"Liberation Sans", sans-serif' textLength="80" lengthAdjust="spacingAndGlyphs" stroke="#2f6f2f" stroke-width="0.45">TB = m+</text>
<text x="1672" y="951.7" font-size="19.5" fill="#2f6f2f" font-family='"Liberation Sans", sans-serif' textLength="93" lengthAdjust="spacingAndGlyphs" stroke="#2f6f2f" stroke-width="0.45">Rem = off</text>
<text x="1672" y="979.6" font-size="19.5" fill="#2f6f2f" font-family='"Liberation Sans", sans-serif' textLength="73" lengthAdjust="spacingAndGlyphs" stroke="#2f6f2f" stroke-width="0.45">00:03s+</text>
<text x="1672" y="1007.5" font-size="19.5" fill="#2f6f2f" font-family='"Liberation Sans", sans-serif' textLength="71" lengthAdjust="spacingAndGlyphs" stroke="#2f6f2f" stroke-width="0.45">01:00m</text>
<text x="1954" y="959" font-size="19.5" fill="#2f6f2f" font-family='"Liberation Sans", sans-serif' textLength="91" lengthAdjust="spacingAndGlyphs" stroke="#2f6f2f" stroke-width="0.45">Rem = off</text>
<text x="1954" y="987" font-size="19.5" fill="#2f6f2f" font-family='"Liberation Sans", sans-serif' textLength="73" lengthAdjust="spacingAndGlyphs" stroke="#2f6f2f" stroke-width="0.45">On=B3+</text>
<text x="1954" y="1015" font-size="19.5" fill="#2f6f2f" font-family='"Liberation Sans", sans-serif' textLength="49" lengthAdjust="spacingAndGlyphs" stroke="#2f6f2f" stroke-width="0.45">Off=0</text>
<text x="1954" y="1043" font-size="19.5" fill="#2f6f2f" font-family='"Liberation Sans", sans-serif' textLength="64" lengthAdjust="spacingAndGlyphs" stroke="#2f6f2f" stroke-width="0.45">Start=0</text>
<text x="2633" y="959" font-size="19.5" fill="#2f6f2f" font-family='"Liberation Sans", sans-serif' textLength="90" lengthAdjust="spacingAndGlyphs" stroke="#2f6f2f" stroke-width="0.45">Rem = off</text>
<text x="2633" y="987" font-size="19.5" fill="#2f6f2f" font-family='"Liberation Sans", sans-serif' textLength="60" lengthAdjust="spacingAndGlyphs" stroke="#2f6f2f" stroke-width="0.45">On=0+</text>
<text x="2633" y="1015" font-size="19.5" fill="#2f6f2f" font-family='"Liberation Sans", sans-serif' textLength="49" lengthAdjust="spacingAndGlyphs" stroke="#2f6f2f" stroke-width="0.45">Off=0</text>
<text x="2633" y="1043" font-size="19.5" fill="#2f6f2f" font-family='"Liberation Sans", sans-serif' textLength="64" lengthAdjust="spacingAndGlyphs" stroke="#2f6f2f" stroke-width="0.45">Start=0</text>
<text x="2972" y="1029" font-size="19.5" fill="#2f6f2f" font-family='"Liberation Sans", sans-serif' textLength="68" lengthAdjust="spacingAndGlyphs" stroke="#2f6f2f" stroke-width="0.45">V1=B7-</text>
<text x="2972" y="1057" font-size="19.5" fill="#2f6f2f" font-family='"Liberation Sans", sans-serif' textLength="49" lengthAdjust="spacingAndGlyphs" stroke="#2f6f2f" stroke-width="0.45">V2=0</text>
<text x="2972" y="1085" font-size="19.5" fill="#2f6f2f" font-family='"Liberation Sans", sans-serif' textLength="49" lengthAdjust="spacingAndGlyphs" stroke="#2f6f2f" stroke-width="0.45">V3=0</text>
<text x="2972" y="1113" font-size="19.5" fill="#2f6f2f" font-family='"Liberation Sans", sans-serif' textLength="49" lengthAdjust="spacingAndGlyphs" stroke="#2f6f2f" stroke-width="0.45">V4=0</text>
<text x="2972" y="1141" font-size="19.5" fill="#2f6f2f" font-family='"Liberation Sans", sans-serif' textLength="71" lengthAdjust="spacingAndGlyphs" stroke="#2f6f2f" stroke-width="0.45">Point=0</text>
<text x="2972" y="1169" font-size="19.5" fill="#2f6f2f" font-family='"Liberation Sans", sans-serif' textLength="120" lengthAdjust="spacingAndGlyphs" stroke="#2f6f2f" stroke-width="0.45">((B7+0)+0)+0</text>
<text x="537.5" y="1087.6" font-size="23.5" fill="#111" font-family='"Liberation Sans", sans-serif' textLength="83" lengthAdjust="spacingAndGlyphs" stroke="#111" stroke-width="0.45">PORTATA</text>
<text x="537.5" y="1118" font-size="23.5" fill="#111" font-family='"Liberation Sans", sans-serif' textLength="60.5" lengthAdjust="spacingAndGlyphs" stroke="#111" stroke-width="0.45">0/1000</text>
<text x="667" y="1146" font-size="23.5" fill="#111" font-family='"Liberation Sans", sans-serif' textLength="144" lengthAdjust="spacingAndGlyphs" stroke="#111" stroke-width="0.45">PORTATA 4/804</text>
<text x="887" y="1165" font-size="23.5" fill="#111" font-family='"Liberation Sans", sans-serif' textLength="187" lengthAdjust="spacingAndGlyphs" stroke="#111" stroke-width="0.45">PORTATA 5/85 l/min</text>
<text x="1189" y="1184" font-size="23.5" fill="#111" font-family='"Liberation Sans", sans-serif' textLength="131" lengthAdjust="spacingAndGlyphs" stroke="#111" stroke-width="0.45">5l/min=0l/min</text>
<text x="1617" y="1205" font-size="23.5" fill="#111" font-family='"Liberation Sans", sans-serif' textLength="313" lengthAdjust="spacingAndGlyphs" stroke="#111" stroke-width="0.45">PORTATA ISTANTANEA 0-85 l/min</text>
<text x="2602.6" y="706" font-size="23.5" fill="#111" font-family='"Liberation Sans", sans-serif' textLength="100.6" lengthAdjust="spacingAndGlyphs" stroke="#111" stroke-width="0.45">CONTA m3</text>
<text x="2918.5" y="726" font-size="23.5" fill="#111" font-family='"Liberation Sans", sans-serif' textLength="147" lengthAdjust="spacingAndGlyphs" stroke="#111" stroke-width="0.45">RITENZIONE m3</text>
<text x="3152" y="726" font-size="23.5" fill="#111" font-family='"Liberation Sans", sans-serif' textLength="162" lengthAdjust="spacingAndGlyphs" stroke="#111" stroke-width="0.45">TOTALIZZATA m3</text>
<rect x="3328" y="414" width="32" height="1416" fill="#efefef" />
<rect x="3358.4" y="414" width="1.599999999999909" height="1416" fill="#a8a8a8" />
<rect x="3328.5" y="414.5" width="29.5" height="29.0" fill="#efefef" stroke="#a4a4a4" stroke-width="1.6" />
<path d="M3336.5,434 l7,-6.5 l7,6.5" fill="none" stroke="#000" stroke-width="3.2" />
<rect x="3330" y="447" width="27" height="937" fill="#efefef" stroke="#a4a4a4" stroke-width="1.6" />
<rect x="3337" y="909" width="14" height="1" fill="#a8a8a8" />
<rect x="3337" y="913" width="14" height="1" fill="#a8a8a8" />
<rect x="3337" y="917" width="14" height="1" fill="#a8a8a8" />
<rect x="3328.5" y="1801" width="29.5" height="27" fill="#efefef" stroke="#a4a4a4" stroke-width="1.6" />
<path d="M3336.5,1811 l7,6.5 l7,-6.5" fill="none" stroke="#000" stroke-width="3.2" />
<rect x="472" y="1830.5" width="2856" height="30.5" fill="#efefef" />
<rect x="474" y="1831" width="27.600000000000023" height="30" fill="#efefef" stroke="#a4a4a4" stroke-width="1.6" />
<path d="M491,1839 l-6.5,7 l6.5,7" fill="none" stroke="#000" stroke-width="3.2" />
<rect x="569" y="1832" width="2542" height="29" fill="#efefef" stroke="#a4a4a4" stroke-width="1.6" />
<rect x="1832" y="1840" width="1" height="14" fill="#a8a8a8" />
<rect x="1836" y="1840" width="1" height="14" fill="#a8a8a8" />
<rect x="1840" y="1840" width="1" height="14" fill="#a8a8a8" />
<rect x="1844" y="1840" width="1" height="14" fill="#a8a8a8" />
<rect x="3298" y="1831" width="28.59999999999991" height="30" fill="#efefef" stroke="#a4a4a4" stroke-width="1.6" />
<path d="M3309,1839 l6.5,7 l-6.5,7" fill="none" stroke="#000" stroke-width="3.2" />
<rect x="3328" y="1828" width="32" height="34" fill="#efefef" />
<rect x="472" y="1861" width="2888" height="115" fill="#efefef" />
<rect x="472" y="1861" width="2888" height="8" fill="#dcdcdc" />
<path d="M500.5,1921 l-7,5 l7,5 M507.5,1921 l-7,5 l7,5" fill="none" stroke="#000" stroke-width="3" />
<rect x="516.5" y="1903.8" width="270.79999999999995" height="49.200000000000045" fill="#efefef" />
<rect x="516.5" y="1903.8" width="270.79999999999995" height="2.2000000000000455" fill="#ffffff" />
<rect x="516.5" y="1903.8" width="2.0" height="49.200000000000045" fill="#ffffff" />
<rect x="516.5" y="1950" width="270.79999999999995" height="3" fill="#909090" />
<rect x="784.5" y="1904" width="2.7999999999999545" height="49" fill="#909090" />
<rect x="521" y="1908" width="190.39999999999998" height="41" fill="#ffffff" stroke="#a4a4a4" stroke-width="1.6" />
<rect x="521" y="1946.5" width="190.39999999999998" height="3.0" fill="#a4a4a4" />
<text x="677" y="1937" font-size="26" fill="#1a1a1a" font-family='"Liberation Sans", sans-serif' text-anchor="end" textLength="35" lengthAdjust="spacingAndGlyphs" >804</text>
<rect x="683" y="1910.5" width="24.700000000000045" height="15.5" fill="#efefef" stroke="#b4b4b4" stroke-width="1.5" />
<rect x="683" y="1929" width="24.700000000000045" height="15.700000000000045" fill="#efefef" stroke="#b4b4b4" stroke-width="1.5" />
<path d="M689,1922 l6.5,-6 l6.5,6 z M689,1933 l6.5,6 l6.5,-6 z" fill="#666" />
<rect x="721" y="1908" width="24.600000000000023" height="40.5" fill="#efefef" stroke="#b8b8b8" stroke-width="1.5" />
<rect x="728.5" y="1912" width="9.5" height="31" fill="none" stroke="#555" stroke-width="2" />
<path d="M726,1927.5 h2.5 M738,1927.5 h3" fill="none" stroke="#555" stroke-width="2" />
<text x="756" y="1937.3" font-size="26" fill="#1a1a40" font-family='"Liberation Sans", sans-serif' textLength="27" lengthAdjust="spacingAndGlyphs" >AI1</text>
<path d="M817.5,1923 l-7,5 l7,5 M824.5,1923 l-7,5 l7,5" fill="none" stroke="#000" stroke-width="3" />
<rect x="835" y="1894" width="118" height="40.5" fill="#ececec" stroke="#b0b0b0" stroke-width="1.5" />
<text x="840" y="1924" font-size="24" fill="#1a1a1a" font-family='"Liberation Sans", sans-serif' textLength="42" lengthAdjust="spacingAndGlyphs" >85.0</text>
<text x="894.0" y="1959" font-size="24" fill="#1a1a1a" font-family='"Liberation Sans", sans-serif' text-anchor="middle" textLength="40" lengthAdjust="spacingAndGlyphs" >AM1</text>
<rect x="953" y="1894" width="120" height="40.5" fill="#ececec" stroke="#b0b0b0" stroke-width="1.5" />
<text x="958" y="1924" font-size="24" fill="#1a1a1a" font-family='"Liberation Sans", sans-serif' textLength="30" lengthAdjust="spacingAndGlyphs" >0.0</text>
<text x="1013.0" y="1959" font-size="24" fill="#1a1a1a" font-family='"Liberation Sans", sans-serif' text-anchor="middle" textLength="40" lengthAdjust="spacingAndGlyphs" >AM2</text>
<rect x="1073" y="1894" width="120" height="40.5" fill="#ececec" stroke="#b0b0b0" stroke-width="1.5" />
<text x="1078" y="1924" font-size="24" fill="#1a1a1a" font-family='"Liberation Sans", sans-serif' textLength="42" lengthAdjust="spacingAndGlyphs" >85.0</text>
<text x="1133.0" y="1959" font-size="24" fill="#1a1a1a" font-family='"Liberation Sans", sans-serif' text-anchor="middle" textLength="40" lengthAdjust="spacingAndGlyphs" >AM3</text>
<path d="M1223,1898.6 a13,13 0 0 1 13,13 c0,6 -4,9 -5.5,14 h-15 c-1.5,-5 -5.5,-8 -5.5,-14 a13,13 0 0 1 13,-13 z" fill="#6c6c6c" stroke="#505050" stroke-width="1.5" />
<rect x="1216.5" y="1926" width="13.0" height="9" fill="#000" />
<circle cx="1223" cy="1935" r="5" fill="#000"/>
<text x="1223" y="1968" font-size="24" fill="#1a1a40" font-family='"Liberation Sans", sans-serif' text-anchor="middle" textLength="26" lengthAdjust="spacingAndGlyphs" >M1</text>
<path d="M1280,1913 l22,22" fill="none" stroke="#404040" stroke-width="2" />
<path d="M1285,1926 l8,-9 l10,10 l-8,9 z" fill="#8090a0" stroke="#404040" stroke-width="1.5" />
<circle cx="1277" cy="1935" r="4" fill="#40d040"/>
<rect x="1310" y="1904" width="43.40000000000009" height="42.700000000000045" fill="#f4f8ff" stroke="#8098c8" stroke-width="1.5" />
<path d="M1320,1913 l24,12 l-24,12 z" fill="#40b040" />
<rect x="1364" y="1913" width="22" height="23" fill="#e83040" />
<rect x="1408" y="1914" width="8" height="22" fill="#f08830" />
<rect x="1423" y="1914" width="8" height="22" fill="#f08830" />
<path d="M1485,1916 q-6,-6 -14,-2 q-8,6 -4,14 q6,8 16,2" fill="none" stroke="#909090" stroke-width="4" />
<path d="M1480,1910 l10,-4 l-1,10 z" fill="#909090" />
<rect x="1498" y="1904" width="159" height="45" fill="#efefef" stroke="#a8a8a8" stroke-width="1.5" />
<text x="1650" y="1938" font-size="24" fill="#555" font-family='"Liberation Sans", sans-serif' text-anchor="end" >1</text>
<rect x="1657" y="1904" width="96" height="45" fill="#c8c8c8" stroke="#b0b0b0" stroke-width="1" />
<rect x="1663" y="1910" width="51" height="33" fill="#dcdcdc" />
<text x="1667" y="1937" font-size="24" fill="#777" font-family='"Liberation Sans", sans-serif' textLength="38" lengthAdjust="spacingAndGlyphs" >Cicli</text>
<path d="M1727,1923 l8,8 l8,-8" fill="none" stroke="#999" stroke-width="2" />
<text x="1766.5" y="1934" font-size="26" fill="#000" font-family='"Liberation Sans", sans-serif' font-weight="bold" textLength="79.1" lengthAdjust="spacingAndGlyphs" >19:06:24</text>
<circle cx="1868" cy="1925" r="12.5" fill="#fff" stroke="#4060c0" stroke-width="2.5"/>
<path d="M1867,1914 v12 h8" fill="none" stroke="#0030a0" stroke-width="3" />
<rect x="1890.6" y="1904" width="42.40000000000009" height="42.700000000000045" fill="#f4f8ff" stroke="#8098c8" stroke-width="1.5" />
<rect x="1898" y="1910" width="9" height="9" fill="#40b0d0" stroke="#000" stroke-width="1" />
<rect x="1898" y="1929" width="9" height="9" fill="#40b0d0" stroke="#000" stroke-width="1" />
<rect x="1915" y="1929" width="9" height="9" fill="#40b0d0" stroke="#000" stroke-width="1" />
<path d="M1902,1919 v10 M1902,1924 h18 v5" fill="none" stroke="#30c030" stroke-width="2" />
<rect x="1941" y="1909" width="29" height="31" fill="#f0f4ff" stroke="#4060c0" stroke-width="1.5" />
<path d="M1945,1916 h21" fill="none" stroke="#2040c0" stroke-width="2" stroke-dasharray="5,2"/>
<path d="M1945,1924 h21" fill="none" stroke="#2040c0" stroke-width="2" stroke-dasharray="5,2"/>
<path d="M1945,1932 h21" fill="none" stroke="#2040c0" stroke-width="2" stroke-dasharray="5,2"/>
<rect x="1985" y="1913" width="29" height="24" fill="#808080" />
<rect x="0" y="1976" width="3360" height="43.5" fill="#e0e0e0" />
<rect x="0" y="1976" width="3360" height="2" fill="#a8a8a8" />
<text x="6.4" y="2006.8" font-size="26" fill="#e03838" font-family='"Liberation Sans", sans-serif' textLength="114.3" lengthAdjust="spacingAndGlyphs" >Simulazione</text>
<rect x="2992" y="1979" width="2" height="38" fill="#c0c0c0" />
<rect x="3028" y="1979" width="2" height="38" fill="#c0c0c0" />
<rect x="3172" y="1979" width="2" height="38" fill="#c0c0c0" />
<rect x="3273.5" y="1979" width="2.0" height="38" fill="#c0c0c0" />
<rect x="2998" y="1983" width="26" height="30" fill="#e8f0ff" stroke="#6080c0" stroke-width="1" />
<text x="3011" y="2008" font-size="22" fill="#1a1a60" font-family='"Liberation Serif", serif' font-weight="bold" text-anchor="middle" >i</text>
<path d="M2998,1986 h8 M3004,1983 l3,3 l-3,3 M3018,2008 h8 M3024,2005 l3,3 l-3,3" fill="none" stroke="#1a1a60" stroke-width="2" />
<rect x="3035" y="1983" width="25" height="29" fill="#4a5868" />
<rect x="3038" y="1992" width="10" height="10" fill="#fff" stroke="#000" stroke-width="1.5" />
<text x="3072" y="2007" font-size="26" fill="#1a1a1a" font-family='"Liberation Sans", sans-serif' textLength="98" lengthAdjust="spacingAndGlyphs" >LOGO! 8.3</text>
<text x="3180" y="2007" font-size="26" fill="#1a1a40" font-family='"Liberation Sans", sans-serif' textLength="47" lengthAdjust="spacingAndGlyphs" >100%</text>
<rect x="0" y="2019.5" width="3360" height="80.5" fill="#0b1a25" />
<rect x="32" y="2044" width="15" height="14" fill="#ffffff" />
<rect x="50" y="2043" width="15" height="15" fill="#ffffff" />
<rect x="32" y="2060" width="15" height="15" fill="#ffffff" />
<rect x="50" y="2060" width="15" height="16" fill="#ffffff" />
<rect x="97" y="2019.5" width="575" height="80.5" fill="#f0f0f0" />
<circle cx="143" cy="2056" r="10.5" fill="none" stroke="#222" stroke-width="2.5"/>
<path d="M135,2064 l-13,13" fill="none" stroke="#222" stroke-width="3" />
<text x="176" y="2074" font-size="30" fill="#222" font-family='"Liberation Sans", sans-serif' textLength="73" lengthAdjust="spacingAndGlyphs" >Cerca</text>
<path d="M706,2052 h22 v20 h-22 z M704,2048 h26 M704,2076 h26" fill="none" stroke="#fff" stroke-width="2.5" />
<rect x="733" y="2050" width="4" height="5" fill="#fff" />
<rect x="733" y="2060" width="3" height="15" fill="#fff" />
<circle cx="821.5" cy="2059" r="24" fill="url(#edgeg)"/>
<path d="M800,2066 q4,16 22,16 q14,0 20,-8 q-12,6 -24,-2 q-10,-8 -6,-18 q-10,2 -12,12 z" fill="#1258b0" />
<path d="M808,2058 q2,-12 16,-12 q14,0 16,14 q-8,-4 -16,-2 q-10,2 -16,0 z" fill="#30b8e8" />
<rect x="898" y="2041" width="44" height="38" fill="#f8cc50" />
<rect x="898" y="2041" width="18" height="5" fill="#e0a830" />
<rect x="909" y="2066" width="22" height="13" fill="#2a80d8" />
<rect x="914" y="2072" width="12" height="7" fill="#f8cc50" />
<rect x="994" y="2047" width="46" height="34" fill="#f0f0f0" rx="5" />
<path d="M1006,2047 v-8 h22 v8" fill="none" stroke="#40a8f0" stroke-width="3" />
<rect x="1008" y="2055" width="8" height="8" fill="#f05030" />
<rect x="1018" y="2055" width="8" height="8" fill="#70c030" />
<rect x="1008" y="2065" width="8" height="8" fill="#30a0f0" />
<rect x="1018" y="2065" width="8" height="8" fill="#f8c020" />
<rect x="1092" y="2051" width="48" height="30" fill="#40a8f0" />
<path d="M1092,2051 l24,-12 l24,12 z" fill="#2060c0" />
<path d="M1092,2051 l24,16 l24,-16" fill="#ffffff" />
<circle cx="1214" cy="2060" r="22" fill="#f07020"/>
<circle cx="1218" cy="2058" r="11" fill="#7030c0"/>
<path d="M1196,2045 q10,-12 26,-10 q-6,4 -8,10 z" fill="#ffa020" />
<rect x="1264" y="2019.5" width="95" height="80.5" fill="#2e3a46" />
<rect x="1264" y="2096" width="95" height="4" fill="#80b0e0" />
<rect x="1287" y="2034" width="49" height="49" fill="#3a4654" />
<clipPath id="lgclip"><rect x="1287" y="2030" width="49" height="56"/></clipPath><g clip-path="url(#lgclip)">
<text x="1288" y="2057.5" font-size="21" fill="#f0f2f4" font-family='"Liberation Sans", sans-serif' textLength="56" lengthAdjust="spacingAndGlyphs" >LOGO</text>
<text x="1306" y="2080.5" font-size="24" fill="#a8b4c0" font-family='"Liberation Sans", sans-serif' textLength="31" lengthAdjust="spacingAndGlyphs" >V8</text>
</g>
<circle cx="2565" cy="2066" r="20" fill="#f0a030"/>
<path d="M2552,2078 q0,-12 14,-10 q8,-8 16,0 q8,2 6,10 z" fill="#b8d0f0" />
<circle cx="2575" cy="2046" r="10" fill="#d02020"/>
<text x="2575" y="2052" font-size="14" fill="#fff" font-family='"Liberation Sans", sans-serif' text-anchor="middle" >1</text>
<text x="2604" y="2069" font-size="28" fill="#ffffff" font-family='"Liberation Sans", sans-serif' textLength="61" lengthAdjust="spacingAndGlyphs" >27°C</text>
<text x="2680" y="2069" font-size="28" fill="#ffffff" font-family='"Liberation Sans", sans-serif' textLength="132" lengthAdjust="spacingAndGlyphs" >Soleggiato</text>
<path d="M2862,2068 l12,-12 l12,12" fill="none" stroke="#fff" stroke-width="2.5" />
<rect x="2912" y="2052" width="19" height="22" fill="none" stroke="#fff" stroke-width="2" rx="6" />
<path d="M2931,2060 l7,-4 v14 l-7,-4" fill="none" stroke="#fff" stroke-width="2" />
<rect x="2955" y="2050" width="29" height="18" fill="none" stroke="#fff" stroke-width="2" />
<path d="M2970,2068 v6 M2962,2075 h16 M2955,2050 v-4 h8 v8" fill="none" stroke="#fff" stroke-width="2" />
<path d="M3003,2058 h6 l8,-7 v28 l-8,-7 h-6 z" fill="none" stroke="#fff" stroke-width="2" />
<path d="M3022,2058 q4,7 0,14 M3027,2053 q7,12 0,24 M3032,2049 q10,16 0,32" fill="none" stroke="#fff" stroke-width="2" />
<text x="3062" y="2051" font-size="26" fill="#fff" font-family='"Liberation Sans", sans-serif' textLength="31" lengthAdjust="spacingAndGlyphs" >ITA</text>
<text x="3068" y="2085.5" font-size="26" fill="#fff" font-family='"Liberation Sans", sans-serif' textLength="18" lengthAdjust="spacingAndGlyphs" >IT</text>
<text x="3157" y="2051" font-size="26" fill="#fff" font-family='"Liberation Sans", sans-serif' textLength="52" lengthAdjust="spacingAndGlyphs" >19:06</text>
<text x="3125" y="2085.5" font-size="26" fill="#fff" font-family='"Liberation Sans", sans-serif' textLength="116" lengthAdjust="spacingAndGlyphs" >06/09/2024</text>
<path d="M3278,2045 h32 v24 h-20 l-8,8 v-8 h-4 z" fill="#fff" />
<rect x="3284" y="2051" width="20" height="1.5" fill="#0b1a25" />
<rect x="3284" y="2056" width="20" height="1.5" fill="#0b1a25" />
<rect x="3284" y="2061" width="20" height="1.5" fill="#0b1a25" />
<circle cx="3308" cy="2074" r="13" fill="#0b1a25" stroke="#888" stroke-width="2"/>
<text x="3308" y="2082" font-size="20" fill="#fff" font-family='"Liberation Sans", sans-serif' text-anchor="middle" >1</text>
<rect x="3349" y="2019.5" width="2" height="80.5" fill="#404a55" />
</svg>
</body></html>
